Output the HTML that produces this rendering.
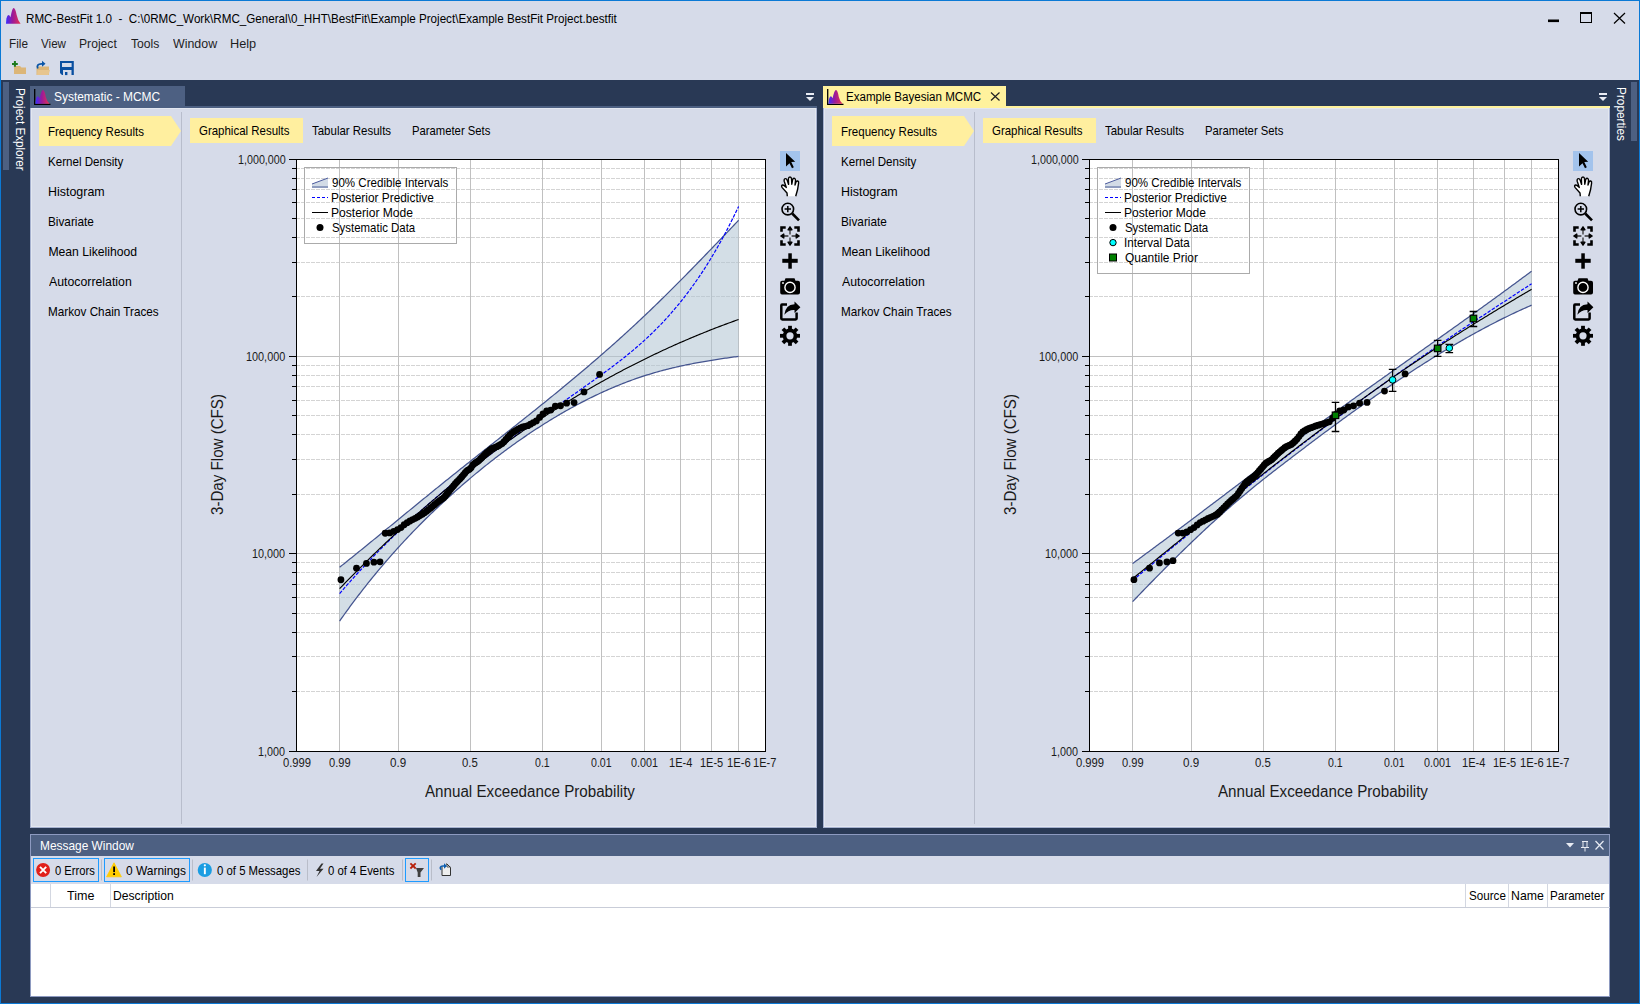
<!DOCTYPE html>
<html><head><meta charset="utf-8"><title>RMC-BestFit</title>
<style>
html,body{margin:0;padding:0;width:1640px;height:1004px;overflow:hidden;background:#d6dbe9;}
body{position:relative;font-family:"Liberation Sans",sans-serif;}
.t{position:absolute;white-space:pre;font-family:"Liberation Sans",sans-serif;transform-origin:0 0;}
.r{position:absolute;}
</style></head><body>
<div class="r" style="left:0px;top:0px;width:1640px;height:1004px;background:#d6dbe9"></div>
<div class="r" style="left:1px;top:80px;width:1638px;height:923px;background:#293955"></div>
<div class="r" style="left:3px;top:82px;width:6px;height:88px;background:#4d6082"></div>
<div class="r" style="left:1631px;top:82px;width:6px;height:59px;background:#4d6082"></div>
<div class="r" style="left:30px;top:86px;width:155px;height:20px;background:#4d6082"></div>
<div class="r" style="left:30px;top:106px;width:787px;height:2px;background:#4d6082"></div>
<div class="r" style="left:30px;top:108px;width:787px;height:720px;background:#a6b1cf"></div>
<div class="r" style="left:31px;top:108px;width:785px;height:719px;background:#e3e7f0"></div>
<div class="r" style="left:32px;top:109px;width:783px;height:717px;background:#d6dbe9"></div>
<div class="r" style="left:823px;top:86px;width:183px;height:20px;background:#fff29d"></div>
<div class="r" style="left:823px;top:106px;width:787px;height:2px;background:#fff29d"></div>
<div class="r" style="left:823px;top:108px;width:787px;height:720px;background:#a6b1cf"></div>
<div class="r" style="left:824px;top:108px;width:785px;height:719px;background:#e3e7f0"></div>
<div class="r" style="left:825px;top:109px;width:783px;height:717px;background:#d6dbe9"></div>
<div class="r" style="left:30px;top:834px;width:1580px;height:163px;background:#8d9ac0"></div>
<div class="r" style="left:31px;top:835px;width:1578px;height:21px;background:#4d6082"></div>
<div class="r" style="left:31px;top:856px;width:1578px;height:28px;background:#d6dbe9"></div>
<div class="r" style="left:31px;top:884px;width:1578px;height:112px;background:#ffffff"></div>
<svg class="r" style="left:0;top:0" width="1640" height="1004">
<polygon points="39,116 171,116 181,131 171,146 39,146" fill="#ffef9f"/>
<rect x="181" y="112" width="1" height="712" fill="#b8bdcc"/>
<rect x="190" y="118" width="113" height="25" fill="#ffef9f"/>
<polygon points="832,116 964,116 974,131 964,146 832,146" fill="#ffef9f"/>
<rect x="974" y="112" width="1" height="712" fill="#b8bdcc"/>
<rect x="983" y="118" width="113" height="25" fill="#ffef9f"/>
<rect x="296" y="159" width="469" height="592" fill="#fff"/>
<line x1="296" y1="691.5" x2="765" y2="691.5" stroke="#d4d4d4" stroke-width="1" stroke-dasharray="4,1"/>
<line x1="296" y1="656.5" x2="765" y2="656.5" stroke="#d4d4d4" stroke-width="1" stroke-dasharray="4,1"/>
<line x1="296" y1="632.5" x2="765" y2="632.5" stroke="#d4d4d4" stroke-width="1" stroke-dasharray="4,1"/>
<line x1="296" y1="613.5" x2="765" y2="613.5" stroke="#d4d4d4" stroke-width="1" stroke-dasharray="4,1"/>
<line x1="296" y1="597.5" x2="765" y2="597.5" stroke="#d4d4d4" stroke-width="1" stroke-dasharray="4,1"/>
<line x1="296" y1="584.5" x2="765" y2="584.5" stroke="#d4d4d4" stroke-width="1" stroke-dasharray="4,1"/>
<line x1="296" y1="572.5" x2="765" y2="572.5" stroke="#d4d4d4" stroke-width="1" stroke-dasharray="4,1"/>
<line x1="296" y1="562.5" x2="765" y2="562.5" stroke="#d4d4d4" stroke-width="1" stroke-dasharray="4,1"/>
<line x1="296" y1="494.5" x2="765" y2="494.5" stroke="#d4d4d4" stroke-width="1" stroke-dasharray="4,1"/>
<line x1="296" y1="459.5" x2="765" y2="459.5" stroke="#d4d4d4" stroke-width="1" stroke-dasharray="4,1"/>
<line x1="296" y1="434.5" x2="765" y2="434.5" stroke="#d4d4d4" stroke-width="1" stroke-dasharray="4,1"/>
<line x1="296" y1="415.5" x2="765" y2="415.5" stroke="#d4d4d4" stroke-width="1" stroke-dasharray="4,1"/>
<line x1="296" y1="400.5" x2="765" y2="400.5" stroke="#d4d4d4" stroke-width="1" stroke-dasharray="4,1"/>
<line x1="296" y1="386.5" x2="765" y2="386.5" stroke="#d4d4d4" stroke-width="1" stroke-dasharray="4,1"/>
<line x1="296" y1="375.5" x2="765" y2="375.5" stroke="#d4d4d4" stroke-width="1" stroke-dasharray="4,1"/>
<line x1="296" y1="365.5" x2="765" y2="365.5" stroke="#d4d4d4" stroke-width="1" stroke-dasharray="4,1"/>
<line x1="296" y1="296.5" x2="765" y2="296.5" stroke="#d4d4d4" stroke-width="1" stroke-dasharray="4,1"/>
<line x1="296" y1="262.5" x2="765" y2="262.5" stroke="#d4d4d4" stroke-width="1" stroke-dasharray="4,1"/>
<line x1="296" y1="237.5" x2="765" y2="237.5" stroke="#d4d4d4" stroke-width="1" stroke-dasharray="4,1"/>
<line x1="296" y1="218.5" x2="765" y2="218.5" stroke="#d4d4d4" stroke-width="1" stroke-dasharray="4,1"/>
<line x1="296" y1="202.5" x2="765" y2="202.5" stroke="#d4d4d4" stroke-width="1" stroke-dasharray="4,1"/>
<line x1="296" y1="189.5" x2="765" y2="189.5" stroke="#d4d4d4" stroke-width="1" stroke-dasharray="4,1"/>
<line x1="296" y1="178.5" x2="765" y2="178.5" stroke="#d4d4d4" stroke-width="1" stroke-dasharray="4,1"/>
<line x1="296" y1="168.5" x2="765" y2="168.5" stroke="#d4d4d4" stroke-width="1" stroke-dasharray="4,1"/>
<line x1="296" y1="553.5" x2="765" y2="553.5" stroke="#c0c0c0" stroke-width="1"/>
<line x1="296" y1="356.5" x2="765" y2="356.5" stroke="#c0c0c0" stroke-width="1"/>
<line x1="339.5" y1="159" x2="339.5" y2="751" stroke="#c0c0c0" stroke-width="1"/>
<line x1="398.5" y1="159" x2="398.5" y2="751" stroke="#c0c0c0" stroke-width="1"/>
<line x1="470.5" y1="159" x2="470.5" y2="751" stroke="#c0c0c0" stroke-width="1"/>
<line x1="542.5" y1="159" x2="542.5" y2="751" stroke="#c0c0c0" stroke-width="1"/>
<line x1="601.5" y1="159" x2="601.5" y2="751" stroke="#c0c0c0" stroke-width="1"/>
<line x1="644.5" y1="159" x2="644.5" y2="751" stroke="#c0c0c0" stroke-width="1"/>
<line x1="680.5" y1="159" x2="680.5" y2="751" stroke="#c0c0c0" stroke-width="1"/>
<line x1="711.5" y1="159" x2="711.5" y2="751" stroke="#c0c0c0" stroke-width="1"/>
<line x1="738.5" y1="159" x2="738.5" y2="751" stroke="#c0c0c0" stroke-width="1"/>
<path d="M339.60,567.27 L341.10,566.07 L342.60,564.87 L344.10,563.67 L345.60,562.47 L347.10,561.27 L348.60,560.06 L350.10,558.86 L351.60,557.65 L353.10,556.44 L354.60,555.23 L356.10,554.02 L357.60,552.81 L359.10,551.59 L360.60,550.37 L362.10,549.16 L363.60,547.94 L365.10,546.72 L366.60,545.50 L368.10,544.28 L369.60,543.06 L371.10,541.84 L372.60,540.61 L374.10,539.39 L375.60,538.16 L377.10,536.94 L378.60,535.71 L380.10,534.48 L381.60,533.26 L383.10,532.03 L384.60,530.80 L386.10,529.57 L387.60,528.34 L389.10,527.11 L390.60,525.88 L392.10,524.65 L393.60,523.42 L395.10,522.19 L396.60,520.96 L398.10,519.73 L399.60,518.50 L401.10,517.27 L402.60,516.04 L404.10,514.81 L405.60,513.58 L407.10,512.35 L408.60,511.12 L410.10,509.89 L411.60,508.66 L413.10,507.43 L414.60,506.20 L416.10,504.98 L417.60,503.75 L419.10,502.52 L420.60,501.30 L422.10,500.07 L423.60,498.85 L425.10,497.62 L426.60,496.40 L428.10,495.18 L429.60,493.96 L431.10,492.74 L432.60,491.52 L434.10,490.30 L435.60,489.08 L437.10,487.87 L438.60,486.65 L440.10,485.44 L441.60,484.23 L443.10,483.02 L444.60,481.81 L446.10,480.60 L447.60,479.40 L449.10,478.19 L450.60,476.99 L452.10,475.79 L453.60,474.58 L455.10,473.39 L456.60,472.19 L458.10,470.99 L459.60,469.79 L461.10,468.60 L462.60,467.41 L464.10,466.21 L465.60,465.02 L467.10,463.83 L468.60,462.64 L470.10,461.45 L471.60,460.27 L473.10,459.08 L474.60,457.89 L476.10,456.70 L477.60,455.52 L479.10,454.33 L480.60,453.15 L482.10,451.96 L483.60,450.78 L485.10,449.60 L486.60,448.41 L488.10,447.23 L489.60,446.05 L491.10,444.86 L492.60,443.68 L494.10,442.50 L495.60,441.32 L497.10,440.13 L498.60,438.95 L500.10,437.77 L501.60,436.58 L503.10,435.40 L504.60,434.22 L506.10,433.03 L507.60,431.85 L509.10,430.66 L510.60,429.47 L512.10,428.29 L513.60,427.10 L515.10,425.91 L516.60,424.72 L518.10,423.54 L519.60,422.35 L521.10,421.15 L522.60,419.96 L524.10,418.77 L525.60,417.57 L527.10,416.38 L528.60,415.18 L530.10,413.99 L531.60,412.79 L533.10,411.59 L534.60,410.39 L536.10,409.18 L537.60,407.98 L539.10,406.78 L540.60,405.57 L542.10,404.36 L543.60,403.15 L545.10,401.94 L546.60,400.73 L548.10,399.51 L549.60,398.29 L551.10,397.08 L552.60,395.86 L554.10,394.63 L555.60,393.41 L557.10,392.18 L558.60,390.96 L560.10,389.73 L561.60,388.49 L563.10,387.26 L564.60,386.02 L566.10,384.78 L567.60,383.54 L569.10,382.30 L570.60,381.05 L572.10,379.81 L573.60,378.56 L575.10,377.30 L576.60,376.05 L578.10,374.79 L579.60,373.53 L581.10,372.26 L582.60,371.00 L584.10,369.73 L585.60,368.46 L587.10,367.18 L588.60,365.90 L590.10,364.62 L591.60,363.34 L593.10,362.05 L594.60,360.76 L596.10,359.47 L597.60,358.17 L599.10,356.87 L600.60,355.57 L602.10,354.27 L603.60,352.96 L605.10,351.64 L606.60,350.33 L608.10,349.01 L609.60,347.68 L611.10,346.36 L612.60,345.03 L614.10,343.69 L615.60,342.35 L617.10,341.01 L618.60,339.67 L620.10,338.32 L621.60,336.96 L623.10,335.61 L624.60,334.25 L626.10,332.88 L627.60,331.51 L629.10,330.14 L630.60,328.76 L632.10,327.38 L633.60,325.99 L635.10,324.60 L636.60,323.20 L638.10,321.81 L639.60,320.40 L641.10,318.99 L642.60,317.58 L644.10,316.16 L645.60,314.74 L647.10,313.31 L648.60,311.88 L650.10,310.45 L651.60,309.01 L653.10,307.56 L654.60,306.11 L656.10,304.66 L657.60,303.20 L659.10,301.74 L660.60,300.28 L662.10,298.81 L663.60,297.33 L665.10,295.86 L666.60,294.38 L668.10,292.89 L669.60,291.41 L671.10,289.91 L672.60,288.42 L674.10,286.92 L675.60,285.42 L677.10,283.92 L678.60,282.41 L680.10,280.90 L681.60,279.38 L683.10,277.87 L684.60,276.35 L686.10,274.82 L687.60,273.30 L689.10,271.77 L690.60,270.24 L692.10,268.71 L693.60,267.17 L695.10,265.63 L696.60,264.09 L698.10,262.55 L699.60,261.00 L701.10,259.46 L702.60,257.91 L704.10,256.36 L705.60,254.80 L707.10,253.25 L708.60,251.69 L710.10,250.13 L711.60,248.57 L713.10,247.01 L714.60,245.44 L716.10,243.88 L717.60,242.31 L719.10,240.75 L720.60,239.18 L722.10,237.61 L723.60,236.04 L725.10,234.46 L726.60,232.89 L728.10,231.31 L729.60,229.74 L731.10,228.16 L732.60,226.59 L734.10,225.01 L735.60,223.43 L737.10,221.85 L738.60,220.27 L738.60,356.37 L737.10,356.57 L735.60,356.77 L734.10,356.97 L732.60,357.18 L731.10,357.38 L729.60,357.59 L728.10,357.80 L726.60,358.01 L725.10,358.23 L723.60,358.45 L722.10,358.67 L720.60,358.89 L719.10,359.11 L717.60,359.34 L716.10,359.57 L714.60,359.81 L713.10,360.04 L711.60,360.28 L710.10,360.53 L708.60,360.77 L707.10,361.02 L705.60,361.28 L704.10,361.54 L702.60,361.80 L701.10,362.06 L699.60,362.33 L698.10,362.60 L696.60,362.88 L695.10,363.16 L693.60,363.45 L692.10,363.74 L690.60,364.03 L689.10,364.33 L687.60,364.64 L686.10,364.95 L684.60,365.26 L683.10,365.58 L681.60,365.90 L680.10,366.23 L678.60,366.57 L677.10,366.91 L675.60,367.25 L674.10,367.60 L672.60,367.96 L671.10,368.32 L669.60,368.69 L668.10,369.06 L666.60,369.44 L665.10,369.83 L663.60,370.22 L662.10,370.62 L660.60,371.02 L659.10,371.43 L657.60,371.85 L656.10,372.27 L654.60,372.70 L653.10,373.14 L651.60,373.59 L650.10,374.04 L648.60,374.50 L647.10,374.96 L645.60,375.44 L644.10,375.92 L642.60,376.41 L641.10,376.90 L639.60,377.41 L638.10,377.92 L636.60,378.43 L635.10,378.96 L633.60,379.49 L632.10,380.03 L630.60,380.58 L629.10,381.13 L627.60,381.70 L626.10,382.26 L624.60,382.84 L623.10,383.42 L621.60,384.02 L620.10,384.61 L618.60,385.22 L617.10,385.83 L615.60,386.45 L614.10,387.08 L612.60,387.71 L611.10,388.35 L609.60,389.00 L608.10,389.66 L606.60,390.32 L605.10,390.99 L603.60,391.66 L602.10,392.35 L600.60,393.04 L599.10,393.74 L597.60,394.44 L596.10,395.15 L594.60,395.87 L593.10,396.59 L591.60,397.33 L590.10,398.06 L588.60,398.81 L587.10,399.56 L585.60,400.32 L584.10,401.09 L582.60,401.86 L581.10,402.64 L579.60,403.43 L578.10,404.22 L576.60,405.02 L575.10,405.83 L573.60,406.64 L572.10,407.46 L570.60,408.29 L569.10,409.12 L567.60,409.96 L566.10,410.81 L564.60,411.66 L563.10,412.52 L561.60,413.39 L560.10,414.26 L558.60,415.14 L557.10,416.02 L555.60,416.92 L554.10,417.82 L552.60,418.72 L551.10,419.63 L549.60,420.55 L548.10,421.48 L546.60,422.41 L545.10,423.34 L543.60,424.29 L542.10,425.24 L540.60,426.19 L539.10,427.16 L537.60,428.13 L536.10,429.10 L534.60,430.08 L533.10,431.07 L531.60,432.07 L530.10,433.07 L528.60,434.07 L527.10,435.09 L525.60,436.11 L524.10,437.13 L522.60,438.16 L521.10,439.20 L519.60,440.25 L518.10,441.30 L516.60,442.36 L515.10,443.42 L513.60,444.49 L512.10,445.57 L510.60,446.65 L509.10,447.74 L507.60,448.84 L506.10,449.94 L504.60,451.05 L503.10,452.16 L501.60,453.29 L500.10,454.42 L498.60,455.55 L497.10,456.69 L495.60,457.84 L494.10,459.00 L492.60,460.16 L491.10,461.33 L489.60,462.50 L488.10,463.68 L486.60,464.87 L485.10,466.07 L483.60,467.27 L482.10,468.48 L480.60,469.69 L479.10,470.92 L477.60,472.15 L476.10,473.38 L474.60,474.62 L473.10,475.87 L471.60,477.13 L470.10,478.39 L468.60,479.66 L467.10,480.94 L465.60,482.22 L464.10,483.51 L462.60,484.81 L461.10,486.11 L459.60,487.42 L458.10,488.74 L456.60,490.07 L455.10,491.40 L453.60,492.74 L452.10,494.08 L450.60,495.44 L449.10,496.80 L447.60,498.16 L446.10,499.54 L444.60,500.92 L443.10,502.31 L441.60,503.70 L440.10,505.10 L438.60,506.51 L437.10,507.93 L435.60,509.35 L434.10,510.79 L432.60,512.23 L431.10,513.67 L429.60,515.13 L428.10,516.59 L426.60,518.06 L425.10,519.54 L423.60,521.03 L422.10,522.53 L420.60,524.03 L419.10,525.55 L417.60,527.07 L416.10,528.60 L414.60,530.14 L413.10,531.69 L411.60,533.25 L410.10,534.82 L408.60,536.40 L407.10,537.99 L405.60,539.59 L404.10,541.19 L402.60,542.81 L401.10,544.44 L399.60,546.07 L398.10,547.72 L396.60,549.38 L395.10,551.05 L393.60,552.73 L392.10,554.42 L390.60,556.12 L389.10,557.83 L387.60,559.55 L386.10,561.28 L384.60,563.03 L383.10,564.78 L381.60,566.55 L380.10,568.33 L378.60,570.12 L377.10,571.92 L375.60,573.73 L374.10,575.56 L372.60,577.40 L371.10,579.25 L369.60,581.11 L368.10,582.98 L366.60,584.87 L365.10,586.77 L363.60,588.68 L362.10,590.61 L360.60,592.55 L359.10,594.50 L357.60,596.46 L356.10,598.44 L354.60,600.43 L353.10,602.44 L351.60,604.46 L350.10,606.49 L348.60,608.54 L347.10,610.59 L345.60,612.67 L344.10,614.76 L342.60,616.86 L341.10,618.98 L339.60,621.11 Z" fill="#afc2d2" fill-opacity="0.55" stroke="none"/>
<path d="M339.60,567.27 L341.10,566.07 L342.60,564.87 L344.10,563.67 L345.60,562.47 L347.10,561.27 L348.60,560.06 L350.10,558.86 L351.60,557.65 L353.10,556.44 L354.60,555.23 L356.10,554.02 L357.60,552.81 L359.10,551.59 L360.60,550.37 L362.10,549.16 L363.60,547.94 L365.10,546.72 L366.60,545.50 L368.10,544.28 L369.60,543.06 L371.10,541.84 L372.60,540.61 L374.10,539.39 L375.60,538.16 L377.10,536.94 L378.60,535.71 L380.10,534.48 L381.60,533.26 L383.10,532.03 L384.60,530.80 L386.10,529.57 L387.60,528.34 L389.10,527.11 L390.60,525.88 L392.10,524.65 L393.60,523.42 L395.10,522.19 L396.60,520.96 L398.10,519.73 L399.60,518.50 L401.10,517.27 L402.60,516.04 L404.10,514.81 L405.60,513.58 L407.10,512.35 L408.60,511.12 L410.10,509.89 L411.60,508.66 L413.10,507.43 L414.60,506.20 L416.10,504.98 L417.60,503.75 L419.10,502.52 L420.60,501.30 L422.10,500.07 L423.60,498.85 L425.10,497.62 L426.60,496.40 L428.10,495.18 L429.60,493.96 L431.10,492.74 L432.60,491.52 L434.10,490.30 L435.60,489.08 L437.10,487.87 L438.60,486.65 L440.10,485.44 L441.60,484.23 L443.10,483.02 L444.60,481.81 L446.10,480.60 L447.60,479.40 L449.10,478.19 L450.60,476.99 L452.10,475.79 L453.60,474.58 L455.10,473.39 L456.60,472.19 L458.10,470.99 L459.60,469.79 L461.10,468.60 L462.60,467.41 L464.10,466.21 L465.60,465.02 L467.10,463.83 L468.60,462.64 L470.10,461.45 L471.60,460.27 L473.10,459.08 L474.60,457.89 L476.10,456.70 L477.60,455.52 L479.10,454.33 L480.60,453.15 L482.10,451.96 L483.60,450.78 L485.10,449.60 L486.60,448.41 L488.10,447.23 L489.60,446.05 L491.10,444.86 L492.60,443.68 L494.10,442.50 L495.60,441.32 L497.10,440.13 L498.60,438.95 L500.10,437.77 L501.60,436.58 L503.10,435.40 L504.60,434.22 L506.10,433.03 L507.60,431.85 L509.10,430.66 L510.60,429.47 L512.10,428.29 L513.60,427.10 L515.10,425.91 L516.60,424.72 L518.10,423.54 L519.60,422.35 L521.10,421.15 L522.60,419.96 L524.10,418.77 L525.60,417.57 L527.10,416.38 L528.60,415.18 L530.10,413.99 L531.60,412.79 L533.10,411.59 L534.60,410.39 L536.10,409.18 L537.60,407.98 L539.10,406.78 L540.60,405.57 L542.10,404.36 L543.60,403.15 L545.10,401.94 L546.60,400.73 L548.10,399.51 L549.60,398.29 L551.10,397.08 L552.60,395.86 L554.10,394.63 L555.60,393.41 L557.10,392.18 L558.60,390.96 L560.10,389.73 L561.60,388.49 L563.10,387.26 L564.60,386.02 L566.10,384.78 L567.60,383.54 L569.10,382.30 L570.60,381.05 L572.10,379.81 L573.60,378.56 L575.10,377.30 L576.60,376.05 L578.10,374.79 L579.60,373.53 L581.10,372.26 L582.60,371.00 L584.10,369.73 L585.60,368.46 L587.10,367.18 L588.60,365.90 L590.10,364.62 L591.60,363.34 L593.10,362.05 L594.60,360.76 L596.10,359.47 L597.60,358.17 L599.10,356.87 L600.60,355.57 L602.10,354.27 L603.60,352.96 L605.10,351.64 L606.60,350.33 L608.10,349.01 L609.60,347.68 L611.10,346.36 L612.60,345.03 L614.10,343.69 L615.60,342.35 L617.10,341.01 L618.60,339.67 L620.10,338.32 L621.60,336.96 L623.10,335.61 L624.60,334.25 L626.10,332.88 L627.60,331.51 L629.10,330.14 L630.60,328.76 L632.10,327.38 L633.60,325.99 L635.10,324.60 L636.60,323.20 L638.10,321.81 L639.60,320.40 L641.10,318.99 L642.60,317.58 L644.10,316.16 L645.60,314.74 L647.10,313.31 L648.60,311.88 L650.10,310.45 L651.60,309.01 L653.10,307.56 L654.60,306.11 L656.10,304.66 L657.60,303.20 L659.10,301.74 L660.60,300.28 L662.10,298.81 L663.60,297.33 L665.10,295.86 L666.60,294.38 L668.10,292.89 L669.60,291.41 L671.10,289.91 L672.60,288.42 L674.10,286.92 L675.60,285.42 L677.10,283.92 L678.60,282.41 L680.10,280.90 L681.60,279.38 L683.10,277.87 L684.60,276.35 L686.10,274.82 L687.60,273.30 L689.10,271.77 L690.60,270.24 L692.10,268.71 L693.60,267.17 L695.10,265.63 L696.60,264.09 L698.10,262.55 L699.60,261.00 L701.10,259.46 L702.60,257.91 L704.10,256.36 L705.60,254.80 L707.10,253.25 L708.60,251.69 L710.10,250.13 L711.60,248.57 L713.10,247.01 L714.60,245.44 L716.10,243.88 L717.60,242.31 L719.10,240.75 L720.60,239.18 L722.10,237.61 L723.60,236.04 L725.10,234.46 L726.60,232.89 L728.10,231.31 L729.60,229.74 L731.10,228.16 L732.60,226.59 L734.10,225.01 L735.60,223.43 L737.10,221.85 L738.60,220.27" fill="none" stroke="#44548f" stroke-width="1.25"/>
<path d="M339.60,621.11 L341.10,618.98 L342.60,616.86 L344.10,614.76 L345.60,612.67 L347.10,610.59 L348.60,608.54 L350.10,606.49 L351.60,604.46 L353.10,602.44 L354.60,600.43 L356.10,598.44 L357.60,596.46 L359.10,594.50 L360.60,592.55 L362.10,590.61 L363.60,588.68 L365.10,586.77 L366.60,584.87 L368.10,582.98 L369.60,581.11 L371.10,579.25 L372.60,577.40 L374.10,575.56 L375.60,573.73 L377.10,571.92 L378.60,570.12 L380.10,568.33 L381.60,566.55 L383.10,564.78 L384.60,563.03 L386.10,561.28 L387.60,559.55 L389.10,557.83 L390.60,556.12 L392.10,554.42 L393.60,552.73 L395.10,551.05 L396.60,549.38 L398.10,547.72 L399.60,546.07 L401.10,544.44 L402.60,542.81 L404.10,541.19 L405.60,539.59 L407.10,537.99 L408.60,536.40 L410.10,534.82 L411.60,533.25 L413.10,531.69 L414.60,530.14 L416.10,528.60 L417.60,527.07 L419.10,525.55 L420.60,524.03 L422.10,522.53 L423.60,521.03 L425.10,519.54 L426.60,518.06 L428.10,516.59 L429.60,515.13 L431.10,513.67 L432.60,512.23 L434.10,510.79 L435.60,509.35 L437.10,507.93 L438.60,506.51 L440.10,505.10 L441.60,503.70 L443.10,502.31 L444.60,500.92 L446.10,499.54 L447.60,498.16 L449.10,496.80 L450.60,495.44 L452.10,494.08 L453.60,492.74 L455.10,491.40 L456.60,490.07 L458.10,488.74 L459.60,487.42 L461.10,486.11 L462.60,484.81 L464.10,483.51 L465.60,482.22 L467.10,480.94 L468.60,479.66 L470.10,478.39 L471.60,477.13 L473.10,475.87 L474.60,474.62 L476.10,473.38 L477.60,472.15 L479.10,470.92 L480.60,469.69 L482.10,468.48 L483.60,467.27 L485.10,466.07 L486.60,464.87 L488.10,463.68 L489.60,462.50 L491.10,461.33 L492.60,460.16 L494.10,459.00 L495.60,457.84 L497.10,456.69 L498.60,455.55 L500.10,454.42 L501.60,453.29 L503.10,452.16 L504.60,451.05 L506.10,449.94 L507.60,448.84 L509.10,447.74 L510.60,446.65 L512.10,445.57 L513.60,444.49 L515.10,443.42 L516.60,442.36 L518.10,441.30 L519.60,440.25 L521.10,439.20 L522.60,438.16 L524.10,437.13 L525.60,436.11 L527.10,435.09 L528.60,434.07 L530.10,433.07 L531.60,432.07 L533.10,431.07 L534.60,430.08 L536.10,429.10 L537.60,428.13 L539.10,427.16 L540.60,426.19 L542.10,425.24 L543.60,424.29 L545.10,423.34 L546.60,422.41 L548.10,421.48 L549.60,420.55 L551.10,419.63 L552.60,418.72 L554.10,417.82 L555.60,416.92 L557.10,416.02 L558.60,415.14 L560.10,414.26 L561.60,413.39 L563.10,412.52 L564.60,411.66 L566.10,410.81 L567.60,409.96 L569.10,409.12 L570.60,408.29 L572.10,407.46 L573.60,406.64 L575.10,405.83 L576.60,405.02 L578.10,404.22 L579.60,403.43 L581.10,402.64 L582.60,401.86 L584.10,401.09 L585.60,400.32 L587.10,399.56 L588.60,398.81 L590.10,398.06 L591.60,397.33 L593.10,396.59 L594.60,395.87 L596.10,395.15 L597.60,394.44 L599.10,393.74 L600.60,393.04 L602.10,392.35 L603.60,391.66 L605.10,390.99 L606.60,390.32 L608.10,389.66 L609.60,389.00 L611.10,388.35 L612.60,387.71 L614.10,387.08 L615.60,386.45 L617.10,385.83 L618.60,385.22 L620.10,384.61 L621.60,384.02 L623.10,383.42 L624.60,382.84 L626.10,382.26 L627.60,381.70 L629.10,381.13 L630.60,380.58 L632.10,380.03 L633.60,379.49 L635.10,378.96 L636.60,378.43 L638.10,377.92 L639.60,377.41 L641.10,376.90 L642.60,376.41 L644.10,375.92 L645.60,375.44 L647.10,374.96 L648.60,374.50 L650.10,374.04 L651.60,373.59 L653.10,373.14 L654.60,372.70 L656.10,372.27 L657.60,371.85 L659.10,371.43 L660.60,371.02 L662.10,370.62 L663.60,370.22 L665.10,369.83 L666.60,369.44 L668.10,369.06 L669.60,368.69 L671.10,368.32 L672.60,367.96 L674.10,367.60 L675.60,367.25 L677.10,366.91 L678.60,366.57 L680.10,366.23 L681.60,365.90 L683.10,365.58 L684.60,365.26 L686.10,364.95 L687.60,364.64 L689.10,364.33 L690.60,364.03 L692.10,363.74 L693.60,363.45 L695.10,363.16 L696.60,362.88 L698.10,362.60 L699.60,362.33 L701.10,362.06 L702.60,361.80 L704.10,361.54 L705.60,361.28 L707.10,361.02 L708.60,360.77 L710.10,360.53 L711.60,360.28 L713.10,360.04 L714.60,359.81 L716.10,359.57 L717.60,359.34 L719.10,359.11 L720.60,358.89 L722.10,358.67 L723.60,358.45 L725.10,358.23 L726.60,358.01 L728.10,357.80 L729.60,357.59 L731.10,357.38 L732.60,357.18 L734.10,356.97 L735.60,356.77 L737.10,356.57 L738.60,356.37" fill="none" stroke="#44548f" stroke-width="1.25"/>
<path d="M339.60,593.60 L341.10,591.86 L342.60,590.12 L344.10,588.39 L345.60,586.68 L347.10,584.97 L348.60,583.27 L350.10,581.58 L351.60,579.90 L353.10,578.23 L354.60,576.57 L356.10,574.91 L357.60,573.27 L359.10,571.63 L360.60,570.00 L362.10,568.38 L363.60,566.77 L365.10,565.16 L366.60,563.57 L368.10,561.98 L369.60,560.40 L371.10,558.83 L372.60,557.27 L374.10,555.71 L375.60,554.16 L377.10,552.62 L378.60,551.09 L380.10,549.57 L381.60,548.05 L383.10,546.54 L384.60,545.04 L386.10,543.55 L387.60,542.06 L389.10,540.58 L390.60,539.11 L392.10,537.65 L393.60,536.19 L395.10,534.74 L396.60,533.29 L398.10,531.86 L399.60,530.43 L401.10,529.00 L402.60,527.59 L404.10,526.18 L405.60,524.77 L407.10,523.38 L408.60,521.99 L410.10,520.60 L411.60,519.23 L413.10,517.86 L414.60,516.49 L416.10,515.13 L417.60,513.78 L419.10,512.43 L420.60,511.09 L422.10,509.76 L423.60,508.43 L425.10,507.11 L426.60,505.79 L428.10,504.48 L429.60,503.17 L431.10,501.87 L432.60,500.58 L434.10,499.29 L435.60,498.01 L437.10,496.73 L438.60,495.45 L440.10,494.19 L441.60,492.92 L443.10,491.67 L444.60,490.41 L446.10,489.17 L447.60,487.92 L449.10,486.68 L450.60,485.45 L452.10,484.22 L453.60,483.00 L455.10,481.78 L456.60,480.56 L458.10,479.35 L459.60,478.15 L461.10,476.94 L462.60,475.75 L464.10,474.55 L465.60,473.36 L467.10,472.18 L468.60,471.00 L470.10,469.82 L471.60,468.64 L473.10,467.48 L474.60,466.31 L476.10,465.15 L477.60,463.99 L479.10,462.83 L480.60,461.68 L482.10,460.53 L483.60,459.39 L485.10,458.25 L486.60,457.11 L488.10,455.97 L489.60,454.84 L491.10,453.71 L492.60,452.59 L494.10,451.46 L495.60,450.34 L497.10,449.23 L498.60,448.11 L500.10,447.00 L501.60,445.89 L503.10,444.78 L504.60,443.68 L506.10,442.58 L507.60,441.48 L509.10,440.38 L510.60,439.29 L512.10,438.19 L513.60,437.10 L515.10,436.01 L516.60,434.93 L518.10,433.84 L519.60,432.76 L521.10,431.68 L522.60,430.60 L524.10,429.52 L525.60,428.45 L527.10,427.37 L528.60,426.30 L530.10,425.23 L531.60,424.16 L533.10,423.09 L534.60,422.02 L536.10,420.96 L537.60,419.89 L539.10,418.83 L540.60,417.77 L542.10,416.70 L543.60,415.64 L545.10,414.58 L546.60,413.52 L548.10,412.46 L549.60,411.41 L551.10,410.35 L552.60,409.29 L554.10,408.23 L555.60,407.18 L557.10,406.12 L558.60,405.07 L560.10,404.01 L561.60,402.95 L563.10,401.90 L564.60,400.84 L566.10,399.79 L567.60,398.73 L569.10,397.68 L570.60,396.62 L572.10,395.56 L573.60,394.51 L575.10,393.45 L576.60,392.39 L578.10,391.33 L579.60,390.28 L581.10,389.22 L582.60,388.16 L584.10,387.09 L585.60,386.03 L587.10,384.97 L588.60,383.91 L590.10,382.84 L591.60,381.77 L593.10,380.71 L594.60,379.64 L596.10,378.57 L597.60,377.49 L599.10,376.41 L600.60,375.33 L602.10,374.25 L603.60,373.16 L605.10,372.06 L606.60,370.96 L608.10,369.86 L609.60,368.75 L611.10,367.63 L612.60,366.51 L614.10,365.37 L615.60,364.24 L617.10,363.09 L618.60,361.93 L620.10,360.77 L621.60,359.60 L623.10,358.42 L624.60,357.22 L626.10,356.02 L627.60,354.81 L629.10,353.59 L630.60,352.35 L632.10,351.10 L633.60,349.84 L635.10,348.57 L636.60,347.28 L638.10,345.99 L639.60,344.67 L641.10,343.35 L642.60,342.00 L644.10,340.65 L645.60,339.28 L647.10,337.89 L648.60,336.48 L650.10,335.06 L651.60,333.62 L653.10,332.17 L654.60,330.69 L656.10,329.20 L657.60,327.69 L659.10,326.16 L660.60,324.61 L662.10,323.05 L663.60,321.46 L665.10,319.85 L666.60,318.22 L668.10,316.57 L669.60,314.89 L671.10,313.20 L672.60,311.48 L674.10,309.73 L675.60,307.97 L677.10,306.18 L678.60,304.36 L680.10,302.52 L681.60,300.66 L683.10,298.77 L684.60,296.85 L686.10,294.90 L687.60,292.93 L689.10,290.93 L690.60,288.90 L692.10,286.85 L693.60,284.76 L695.10,282.64 L696.60,280.50 L698.10,278.32 L699.60,276.12 L701.10,273.88 L702.60,271.61 L704.10,269.31 L705.60,266.97 L707.10,264.60 L708.60,262.20 L710.10,259.77 L711.60,257.30 L713.10,254.79 L714.60,252.25 L716.10,249.67 L717.60,247.06 L719.10,244.41 L720.60,241.72 L722.10,239.00 L723.60,236.24 L725.10,233.44 L726.60,230.60 L728.10,227.72 L729.60,224.80 L731.10,221.84 L732.60,218.84 L734.10,215.80 L735.60,212.71 L737.10,209.59 L738.60,206.42" fill="none" stroke="#0000ff" stroke-width="1.2" stroke-dasharray="3.5,1.5"/>
<path d="M339.60,588.67 L341.10,587.12 L342.60,585.56 L344.10,584.02 L345.60,582.47 L347.10,580.94 L348.60,579.40 L350.10,577.87 L351.60,576.35 L353.10,574.83 L354.60,573.32 L356.10,571.80 L357.60,570.30 L359.10,568.80 L360.60,567.30 L362.10,565.81 L363.60,564.32 L365.10,562.84 L366.60,561.36 L368.10,559.88 L369.60,558.41 L371.10,556.95 L372.60,555.49 L374.10,554.03 L375.60,552.58 L377.10,551.13 L378.60,549.69 L380.10,548.25 L381.60,546.82 L383.10,545.39 L384.60,543.96 L386.10,542.54 L387.60,541.13 L389.10,539.72 L390.60,538.31 L392.10,536.91 L393.60,535.51 L395.10,534.11 L396.60,532.72 L398.10,531.34 L399.60,529.96 L401.10,528.58 L402.60,527.21 L404.10,525.84 L405.60,524.48 L407.10,523.12 L408.60,521.77 L410.10,520.41 L411.60,519.07 L413.10,517.73 L414.60,516.39 L416.10,515.06 L417.60,513.73 L419.10,512.40 L420.60,511.08 L422.10,509.77 L423.60,508.46 L425.10,507.15 L426.60,505.85 L428.10,504.55 L429.60,503.26 L431.10,501.97 L432.60,500.68 L434.10,499.40 L435.60,498.12 L437.10,496.85 L438.60,495.58 L440.10,494.32 L441.60,493.06 L443.10,491.80 L444.60,490.55 L446.10,489.30 L447.60,488.06 L449.10,486.82 L450.60,485.58 L452.10,484.35 L453.60,483.13 L455.10,481.90 L456.60,480.69 L458.10,479.47 L459.60,478.26 L461.10,477.06 L462.60,475.85 L464.10,474.66 L465.60,473.46 L467.10,472.27 L468.60,471.09 L470.10,469.91 L471.60,468.73 L473.10,467.56 L474.60,466.39 L476.10,465.23 L477.60,464.07 L479.10,462.91 L480.60,461.76 L482.10,460.61 L483.60,459.47 L485.10,458.33 L486.60,457.19 L488.10,456.06 L489.60,454.93 L491.10,453.81 L492.60,452.69 L494.10,451.57 L495.60,450.46 L497.10,449.35 L498.60,448.25 L500.10,447.15 L501.60,446.05 L503.10,444.96 L504.60,443.88 L506.10,442.79 L507.60,441.71 L509.10,440.64 L510.60,439.57 L512.10,438.50 L513.60,437.43 L515.10,436.37 L516.60,435.32 L518.10,434.27 L519.60,433.22 L521.10,432.17 L522.60,431.13 L524.10,430.10 L525.60,429.07 L527.10,428.04 L528.60,427.01 L530.10,425.99 L531.60,424.98 L533.10,423.96 L534.60,422.96 L536.10,421.95 L537.60,420.95 L539.10,419.95 L540.60,418.96 L542.10,417.97 L543.60,416.98 L545.10,416.00 L546.60,415.02 L548.10,414.05 L549.60,413.08 L551.10,412.11 L552.60,411.15 L554.10,410.19 L555.60,409.24 L557.10,408.28 L558.60,407.34 L560.10,406.39 L561.60,405.45 L563.10,404.52 L564.60,403.58 L566.10,402.66 L567.60,401.73 L569.10,400.81 L570.60,399.89 L572.10,398.98 L573.60,398.07 L575.10,397.16 L576.60,396.26 L578.10,395.36 L579.60,394.47 L581.10,393.58 L582.60,392.69 L584.10,391.80 L585.60,390.92 L587.10,390.05 L588.60,389.17 L590.10,388.30 L591.60,387.44 L593.10,386.58 L594.60,385.72 L596.10,384.86 L597.60,384.01 L599.10,383.17 L600.60,382.32 L602.10,381.48 L603.60,380.65 L605.10,379.81 L606.60,378.98 L608.10,378.16 L609.60,377.34 L611.10,376.52 L612.60,375.70 L614.10,374.89 L615.60,374.08 L617.10,373.28 L618.60,372.48 L620.10,371.68 L621.60,370.89 L623.10,370.10 L624.60,369.31 L626.10,368.53 L627.60,367.75 L629.10,366.97 L630.60,366.20 L632.10,365.43 L633.60,364.67 L635.10,363.91 L636.60,363.15 L638.10,362.39 L639.60,361.64 L641.10,360.89 L642.60,360.15 L644.10,359.41 L645.60,358.67 L647.10,357.94 L648.60,357.21 L650.10,356.48 L651.60,355.76 L653.10,355.04 L654.60,354.32 L656.10,353.61 L657.60,352.90 L659.10,352.19 L660.60,351.49 L662.10,350.79 L663.60,350.09 L665.10,349.40 L666.60,348.71 L668.10,348.02 L669.60,347.34 L671.10,346.66 L672.60,345.98 L674.10,345.31 L675.60,344.64 L677.10,343.98 L678.60,343.31 L680.10,342.65 L681.60,342.00 L683.10,341.35 L684.60,340.70 L686.10,340.05 L687.60,339.41 L689.10,338.77 L690.60,338.13 L692.10,337.50 L693.60,336.87 L695.10,336.24 L696.60,335.62 L698.10,335.00 L699.60,334.38 L701.10,333.77 L702.60,333.16 L704.10,332.55 L705.60,331.95 L707.10,331.35 L708.60,330.75 L710.10,330.16 L711.60,329.57 L713.10,328.98 L714.60,328.40 L716.10,327.81 L717.60,327.24 L719.10,326.66 L720.60,326.09 L722.10,325.52 L723.60,324.96 L725.10,324.39 L726.60,323.84 L728.10,323.28 L729.60,322.73 L731.10,322.18 L732.60,321.63 L734.10,321.09 L735.60,320.55 L737.10,320.01 L738.60,319.48" fill="none" stroke="#000" stroke-width="1.15"/>
<circle cx="599.59" cy="374.47" r="3.4" fill="#000"/>
<circle cx="584.00" cy="391.97" r="3.4" fill="#000"/>
<circle cx="574.08" cy="402.53" r="3.4" fill="#000"/>
<circle cx="566.61" cy="403.13" r="3.4" fill="#000"/>
<circle cx="560.52" cy="405.73" r="3.4" fill="#000"/>
<circle cx="555.33" cy="406.25" r="3.4" fill="#000"/>
<circle cx="550.77" cy="410.03" r="3.4" fill="#000"/>
<circle cx="546.69" cy="410.86" r="3.4" fill="#000"/>
<circle cx="542.97" cy="413.93" r="3.4" fill="#000"/>
<circle cx="539.54" cy="417.45" r="3.4" fill="#000"/>
<circle cx="536.35" cy="420.90" r="3.4" fill="#000"/>
<circle cx="533.36" cy="422.59" r="3.4" fill="#000"/>
<circle cx="530.53" cy="424.18" r="3.4" fill="#000"/>
<circle cx="527.85" cy="425.67" r="3.4" fill="#000"/>
<circle cx="525.29" cy="426.36" r="3.4" fill="#000"/>
<circle cx="522.85" cy="427.01" r="3.4" fill="#000"/>
<circle cx="520.49" cy="427.80" r="3.4" fill="#000"/>
<circle cx="518.22" cy="429.11" r="3.4" fill="#000"/>
<circle cx="516.03" cy="430.39" r="3.4" fill="#000"/>
<circle cx="513.90" cy="431.63" r="3.4" fill="#000"/>
<circle cx="511.83" cy="433.35" r="3.4" fill="#000"/>
<circle cx="509.82" cy="435.11" r="3.4" fill="#000"/>
<circle cx="507.85" cy="437.13" r="3.4" fill="#000"/>
<circle cx="505.93" cy="439.44" r="3.4" fill="#000"/>
<circle cx="504.06" cy="441.69" r="3.4" fill="#000"/>
<circle cx="502.21" cy="443.54" r="3.4" fill="#000"/>
<circle cx="500.40" cy="444.60" r="3.4" fill="#000"/>
<circle cx="498.63" cy="445.64" r="3.4" fill="#000"/>
<circle cx="496.87" cy="446.66" r="3.4" fill="#000"/>
<circle cx="495.15" cy="447.37" r="3.4" fill="#000"/>
<circle cx="493.45" cy="448.06" r="3.4" fill="#000"/>
<circle cx="491.76" cy="448.75" r="3.4" fill="#000"/>
<circle cx="490.10" cy="449.82" r="3.4" fill="#000"/>
<circle cx="488.45" cy="451.30" r="3.4" fill="#000"/>
<circle cx="486.82" cy="452.77" r="3.4" fill="#000"/>
<circle cx="485.21" cy="454.22" r="3.4" fill="#000"/>
<circle cx="483.60" cy="455.80" r="3.4" fill="#000"/>
<circle cx="482.01" cy="457.39" r="3.4" fill="#000"/>
<circle cx="480.42" cy="458.98" r="3.4" fill="#000"/>
<circle cx="478.85" cy="460.54" r="3.4" fill="#000"/>
<circle cx="477.28" cy="461.64" r="3.4" fill="#000"/>
<circle cx="475.71" cy="462.73" r="3.4" fill="#000"/>
<circle cx="474.15" cy="463.82" r="3.4" fill="#000"/>
<circle cx="472.59" cy="465.21" r="3.4" fill="#000"/>
<circle cx="471.04" cy="467.82" r="3.4" fill="#000"/>
<circle cx="469.48" cy="469.30" r="3.4" fill="#000"/>
<circle cx="467.93" cy="470.12" r="3.4" fill="#000"/>
<circle cx="466.37" cy="471.35" r="3.4" fill="#000"/>
<circle cx="464.81" cy="473.22" r="3.4" fill="#000"/>
<circle cx="463.24" cy="475.09" r="3.4" fill="#000"/>
<circle cx="461.67" cy="476.97" r="3.4" fill="#000"/>
<circle cx="460.10" cy="478.67" r="3.4" fill="#000"/>
<circle cx="458.51" cy="480.33" r="3.4" fill="#000"/>
<circle cx="456.92" cy="482.01" r="3.4" fill="#000"/>
<circle cx="455.31" cy="483.70" r="3.4" fill="#000"/>
<circle cx="453.70" cy="485.65" r="3.4" fill="#000"/>
<circle cx="452.07" cy="487.62" r="3.4" fill="#000"/>
<circle cx="450.42" cy="489.62" r="3.4" fill="#000"/>
<circle cx="448.76" cy="491.68" r="3.4" fill="#000"/>
<circle cx="447.07" cy="493.77" r="3.4" fill="#000"/>
<circle cx="445.37" cy="495.88" r="3.4" fill="#000"/>
<circle cx="443.65" cy="497.87" r="3.4" fill="#000"/>
<circle cx="441.89" cy="499.07" r="3.4" fill="#000"/>
<circle cx="440.12" cy="500.29" r="3.4" fill="#000"/>
<circle cx="438.31" cy="501.53" r="3.4" fill="#000"/>
<circle cx="436.46" cy="503.09" r="3.4" fill="#000"/>
<circle cx="434.59" cy="504.70" r="3.4" fill="#000"/>
<circle cx="432.67" cy="506.34" r="3.4" fill="#000"/>
<circle cx="430.70" cy="507.96" r="3.4" fill="#000"/>
<circle cx="428.69" cy="509.56" r="3.4" fill="#000"/>
<circle cx="426.62" cy="511.21" r="3.4" fill="#000"/>
<circle cx="424.49" cy="512.81" r="3.4" fill="#000"/>
<circle cx="422.30" cy="514.15" r="3.4" fill="#000"/>
<circle cx="420.03" cy="515.55" r="3.4" fill="#000"/>
<circle cx="417.67" cy="516.99" r="3.4" fill="#000"/>
<circle cx="415.23" cy="518.29" r="3.4" fill="#000"/>
<circle cx="412.67" cy="519.57" r="3.4" fill="#000"/>
<circle cx="409.99" cy="521.01" r="3.4" fill="#000"/>
<circle cx="407.16" cy="522.70" r="3.4" fill="#000"/>
<circle cx="404.17" cy="524.73" r="3.4" fill="#000"/>
<circle cx="400.98" cy="527.55" r="3.4" fill="#000"/>
<circle cx="397.55" cy="529.59" r="3.4" fill="#000"/>
<circle cx="393.83" cy="531.31" r="3.4" fill="#000"/>
<circle cx="389.75" cy="532.95" r="3.4" fill="#000"/>
<circle cx="385.19" cy="533.27" r="3.4" fill="#000"/>
<circle cx="380.00" cy="561.80" r="3.4" fill="#000"/>
<circle cx="373.91" cy="562.19" r="3.4" fill="#000"/>
<circle cx="366.44" cy="563.38" r="3.4" fill="#000"/>
<circle cx="356.52" cy="568.19" r="3.4" fill="#000"/>
<circle cx="340.93" cy="579.73" r="3.4" fill="#000"/>
<rect x="296.5" y="159.5" width="469" height="592" fill="none" stroke="#000" stroke-width="1"/>
<line x1="289" y1="751.5" x2="296" y2="751.5" stroke="#000" stroke-width="1"/>
<line x1="292" y1="691.5" x2="296" y2="691.5" stroke="#000" stroke-width="1"/>
<line x1="292" y1="656.5" x2="296" y2="656.5" stroke="#000" stroke-width="1"/>
<line x1="292" y1="632.5" x2="296" y2="632.5" stroke="#000" stroke-width="1"/>
<line x1="292" y1="613.5" x2="296" y2="613.5" stroke="#000" stroke-width="1"/>
<line x1="292" y1="597.5" x2="296" y2="597.5" stroke="#000" stroke-width="1"/>
<line x1="292" y1="584.5" x2="296" y2="584.5" stroke="#000" stroke-width="1"/>
<line x1="292" y1="572.5" x2="296" y2="572.5" stroke="#000" stroke-width="1"/>
<line x1="292" y1="562.5" x2="296" y2="562.5" stroke="#000" stroke-width="1"/>
<line x1="289" y1="553.5" x2="296" y2="553.5" stroke="#000" stroke-width="1"/>
<line x1="292" y1="494.5" x2="296" y2="494.5" stroke="#000" stroke-width="1"/>
<line x1="292" y1="459.5" x2="296" y2="459.5" stroke="#000" stroke-width="1"/>
<line x1="292" y1="434.5" x2="296" y2="434.5" stroke="#000" stroke-width="1"/>
<line x1="292" y1="415.5" x2="296" y2="415.5" stroke="#000" stroke-width="1"/>
<line x1="292" y1="400.5" x2="296" y2="400.5" stroke="#000" stroke-width="1"/>
<line x1="292" y1="386.5" x2="296" y2="386.5" stroke="#000" stroke-width="1"/>
<line x1="292" y1="375.5" x2="296" y2="375.5" stroke="#000" stroke-width="1"/>
<line x1="292" y1="365.5" x2="296" y2="365.5" stroke="#000" stroke-width="1"/>
<line x1="289" y1="356.5" x2="296" y2="356.5" stroke="#000" stroke-width="1"/>
<line x1="292" y1="296.5" x2="296" y2="296.5" stroke="#000" stroke-width="1"/>
<line x1="292" y1="262.5" x2="296" y2="262.5" stroke="#000" stroke-width="1"/>
<line x1="292" y1="237.5" x2="296" y2="237.5" stroke="#000" stroke-width="1"/>
<line x1="292" y1="218.5" x2="296" y2="218.5" stroke="#000" stroke-width="1"/>
<line x1="292" y1="202.5" x2="296" y2="202.5" stroke="#000" stroke-width="1"/>
<line x1="292" y1="189.5" x2="296" y2="189.5" stroke="#000" stroke-width="1"/>
<line x1="292" y1="178.5" x2="296" y2="178.5" stroke="#000" stroke-width="1"/>
<line x1="292" y1="168.5" x2="296" y2="168.5" stroke="#000" stroke-width="1"/>
<line x1="289" y1="159.5" x2="296" y2="159.5" stroke="#000" stroke-width="1"/>
<rect x="1089" y="159" width="469" height="592" fill="#fff"/>
<line x1="1089" y1="691.5" x2="1558" y2="691.5" stroke="#d4d4d4" stroke-width="1" stroke-dasharray="4,1"/>
<line x1="1089" y1="656.5" x2="1558" y2="656.5" stroke="#d4d4d4" stroke-width="1" stroke-dasharray="4,1"/>
<line x1="1089" y1="632.5" x2="1558" y2="632.5" stroke="#d4d4d4" stroke-width="1" stroke-dasharray="4,1"/>
<line x1="1089" y1="613.5" x2="1558" y2="613.5" stroke="#d4d4d4" stroke-width="1" stroke-dasharray="4,1"/>
<line x1="1089" y1="597.5" x2="1558" y2="597.5" stroke="#d4d4d4" stroke-width="1" stroke-dasharray="4,1"/>
<line x1="1089" y1="584.5" x2="1558" y2="584.5" stroke="#d4d4d4" stroke-width="1" stroke-dasharray="4,1"/>
<line x1="1089" y1="572.5" x2="1558" y2="572.5" stroke="#d4d4d4" stroke-width="1" stroke-dasharray="4,1"/>
<line x1="1089" y1="562.5" x2="1558" y2="562.5" stroke="#d4d4d4" stroke-width="1" stroke-dasharray="4,1"/>
<line x1="1089" y1="494.5" x2="1558" y2="494.5" stroke="#d4d4d4" stroke-width="1" stroke-dasharray="4,1"/>
<line x1="1089" y1="459.5" x2="1558" y2="459.5" stroke="#d4d4d4" stroke-width="1" stroke-dasharray="4,1"/>
<line x1="1089" y1="434.5" x2="1558" y2="434.5" stroke="#d4d4d4" stroke-width="1" stroke-dasharray="4,1"/>
<line x1="1089" y1="415.5" x2="1558" y2="415.5" stroke="#d4d4d4" stroke-width="1" stroke-dasharray="4,1"/>
<line x1="1089" y1="400.5" x2="1558" y2="400.5" stroke="#d4d4d4" stroke-width="1" stroke-dasharray="4,1"/>
<line x1="1089" y1="386.5" x2="1558" y2="386.5" stroke="#d4d4d4" stroke-width="1" stroke-dasharray="4,1"/>
<line x1="1089" y1="375.5" x2="1558" y2="375.5" stroke="#d4d4d4" stroke-width="1" stroke-dasharray="4,1"/>
<line x1="1089" y1="365.5" x2="1558" y2="365.5" stroke="#d4d4d4" stroke-width="1" stroke-dasharray="4,1"/>
<line x1="1089" y1="296.5" x2="1558" y2="296.5" stroke="#d4d4d4" stroke-width="1" stroke-dasharray="4,1"/>
<line x1="1089" y1="262.5" x2="1558" y2="262.5" stroke="#d4d4d4" stroke-width="1" stroke-dasharray="4,1"/>
<line x1="1089" y1="237.5" x2="1558" y2="237.5" stroke="#d4d4d4" stroke-width="1" stroke-dasharray="4,1"/>
<line x1="1089" y1="218.5" x2="1558" y2="218.5" stroke="#d4d4d4" stroke-width="1" stroke-dasharray="4,1"/>
<line x1="1089" y1="202.5" x2="1558" y2="202.5" stroke="#d4d4d4" stroke-width="1" stroke-dasharray="4,1"/>
<line x1="1089" y1="189.5" x2="1558" y2="189.5" stroke="#d4d4d4" stroke-width="1" stroke-dasharray="4,1"/>
<line x1="1089" y1="178.5" x2="1558" y2="178.5" stroke="#d4d4d4" stroke-width="1" stroke-dasharray="4,1"/>
<line x1="1089" y1="168.5" x2="1558" y2="168.5" stroke="#d4d4d4" stroke-width="1" stroke-dasharray="4,1"/>
<line x1="1089" y1="553.5" x2="1558" y2="553.5" stroke="#c0c0c0" stroke-width="1"/>
<line x1="1089" y1="356.5" x2="1558" y2="356.5" stroke="#c0c0c0" stroke-width="1"/>
<line x1="1132.5" y1="159" x2="1132.5" y2="751" stroke="#c0c0c0" stroke-width="1"/>
<line x1="1191.5" y1="159" x2="1191.5" y2="751" stroke="#c0c0c0" stroke-width="1"/>
<line x1="1263.5" y1="159" x2="1263.5" y2="751" stroke="#c0c0c0" stroke-width="1"/>
<line x1="1335.5" y1="159" x2="1335.5" y2="751" stroke="#c0c0c0" stroke-width="1"/>
<line x1="1394.5" y1="159" x2="1394.5" y2="751" stroke="#c0c0c0" stroke-width="1"/>
<line x1="1437.5" y1="159" x2="1437.5" y2="751" stroke="#c0c0c0" stroke-width="1"/>
<line x1="1473.5" y1="159" x2="1473.5" y2="751" stroke="#c0c0c0" stroke-width="1"/>
<line x1="1504.5" y1="159" x2="1504.5" y2="751" stroke="#c0c0c0" stroke-width="1"/>
<line x1="1531.5" y1="159" x2="1531.5" y2="751" stroke="#c0c0c0" stroke-width="1"/>
<path d="M1132.60,563.52 L1134.10,562.43 L1135.60,561.33 L1137.10,560.23 L1138.60,559.13 L1140.10,558.03 L1141.60,556.93 L1143.10,555.82 L1144.60,554.72 L1146.10,553.61 L1147.60,552.50 L1149.10,551.40 L1150.60,550.29 L1152.10,549.18 L1153.60,548.07 L1155.10,546.96 L1156.60,545.84 L1158.10,544.73 L1159.60,543.62 L1161.10,542.50 L1162.60,541.39 L1164.10,540.27 L1165.60,539.15 L1167.10,538.03 L1168.60,536.91 L1170.10,535.79 L1171.60,534.67 L1173.10,533.55 L1174.60,532.43 L1176.10,531.31 L1177.60,530.18 L1179.10,529.06 L1180.60,527.94 L1182.10,526.81 L1183.60,525.68 L1185.10,524.56 L1186.60,523.43 L1188.10,522.30 L1189.60,521.18 L1191.10,520.05 L1192.60,518.92 L1194.10,517.79 L1195.60,516.66 L1197.10,515.53 L1198.60,514.40 L1200.10,513.27 L1201.60,512.14 L1203.10,511.01 L1204.60,509.87 L1206.10,508.74 L1207.60,507.61 L1209.10,506.48 L1210.60,505.34 L1212.10,504.21 L1213.60,503.08 L1215.10,501.94 L1216.60,500.81 L1218.10,499.68 L1219.60,498.54 L1221.10,497.41 L1222.60,496.27 L1224.10,495.14 L1225.60,494.01 L1227.10,492.87 L1228.60,491.74 L1230.10,490.60 L1231.60,489.47 L1233.10,488.33 L1234.60,487.20 L1236.10,486.06 L1237.60,484.93 L1239.10,483.80 L1240.60,482.66 L1242.10,481.53 L1243.60,480.39 L1245.10,479.26 L1246.60,478.13 L1248.10,476.99 L1249.60,475.86 L1251.10,474.73 L1252.60,473.60 L1254.10,472.46 L1255.60,471.33 L1257.10,470.20 L1258.60,469.07 L1260.10,467.94 L1261.60,466.81 L1263.10,465.68 L1264.60,464.55 L1266.10,463.42 L1267.60,462.29 L1269.10,461.16 L1270.60,460.03 L1272.10,458.91 L1273.60,457.78 L1275.10,456.65 L1276.60,455.53 L1278.10,454.40 L1279.60,453.28 L1281.10,452.16 L1282.60,451.03 L1284.10,449.91 L1285.60,448.79 L1287.10,447.67 L1288.60,446.55 L1290.10,445.43 L1291.60,444.31 L1293.10,443.19 L1294.60,442.07 L1296.10,440.96 L1297.60,439.84 L1299.10,438.73 L1300.60,437.61 L1302.10,436.50 L1303.60,435.39 L1305.10,434.28 L1306.60,433.16 L1308.10,432.06 L1309.60,430.95 L1311.10,429.84 L1312.60,428.73 L1314.10,427.63 L1315.60,426.52 L1317.10,425.42 L1318.60,424.32 L1320.10,423.22 L1321.60,422.12 L1323.10,421.02 L1324.60,419.92 L1326.10,418.82 L1327.60,417.73 L1329.10,416.63 L1330.60,415.54 L1332.10,414.45 L1333.60,413.36 L1335.10,412.27 L1336.60,411.18 L1338.10,410.09 L1339.60,409.00 L1341.10,407.92 L1342.60,406.83 L1344.10,405.75 L1345.60,404.67 L1347.10,403.58 L1348.60,402.50 L1350.10,401.42 L1351.60,400.34 L1353.10,399.26 L1354.60,398.19 L1356.10,397.11 L1357.60,396.03 L1359.10,394.96 L1360.60,393.88 L1362.10,392.81 L1363.60,391.73 L1365.10,390.66 L1366.60,389.59 L1368.10,388.52 L1369.60,387.45 L1371.10,386.38 L1372.60,385.31 L1374.10,384.24 L1375.60,383.17 L1377.10,382.10 L1378.60,381.03 L1380.10,379.97 L1381.60,378.90 L1383.10,377.83 L1384.60,376.77 L1386.10,375.70 L1387.60,374.64 L1389.10,373.57 L1390.60,372.51 L1392.10,371.44 L1393.60,370.38 L1395.10,369.32 L1396.60,368.25 L1398.10,367.19 L1399.60,366.13 L1401.10,365.07 L1402.60,364.00 L1404.10,362.94 L1405.60,361.88 L1407.10,360.82 L1408.60,359.76 L1410.10,358.69 L1411.60,357.63 L1413.10,356.57 L1414.60,355.51 L1416.10,354.45 L1417.60,353.39 L1419.10,352.32 L1420.60,351.26 L1422.10,350.20 L1423.60,349.14 L1425.10,348.08 L1426.60,347.01 L1428.10,345.95 L1429.60,344.89 L1431.10,343.83 L1432.60,342.76 L1434.10,341.70 L1435.60,340.64 L1437.10,339.57 L1438.60,338.51 L1440.10,337.44 L1441.60,336.38 L1443.10,335.32 L1444.60,334.25 L1446.10,333.18 L1447.60,332.12 L1449.10,331.05 L1450.60,329.98 L1452.10,328.92 L1453.60,327.85 L1455.10,326.78 L1456.60,325.71 L1458.10,324.64 L1459.60,323.57 L1461.10,322.50 L1462.60,321.43 L1464.10,320.36 L1465.60,319.29 L1467.10,318.21 L1468.60,317.14 L1470.10,316.06 L1471.60,314.99 L1473.10,313.91 L1474.60,312.84 L1476.10,311.76 L1477.60,310.68 L1479.10,309.60 L1480.60,308.52 L1482.10,307.44 L1483.60,306.36 L1485.10,305.27 L1486.60,304.19 L1488.10,303.11 L1489.60,302.02 L1491.10,300.93 L1492.60,299.85 L1494.10,298.76 L1495.60,297.67 L1497.10,296.58 L1498.60,295.49 L1500.10,294.39 L1501.60,293.30 L1503.10,292.20 L1504.60,291.11 L1506.10,290.01 L1507.60,288.91 L1509.10,287.81 L1510.60,286.71 L1512.10,285.61 L1513.60,284.51 L1515.10,283.40 L1516.60,282.29 L1518.10,281.19 L1519.60,280.08 L1521.10,278.97 L1522.60,277.86 L1524.10,276.74 L1525.60,275.63 L1527.10,274.51 L1528.60,273.40 L1530.10,272.28 L1531.60,271.16 L1531.60,305.17 L1530.10,305.82 L1528.60,306.48 L1527.10,307.14 L1525.60,307.81 L1524.10,308.48 L1522.60,309.16 L1521.10,309.84 L1519.60,310.53 L1518.10,311.22 L1516.60,311.92 L1515.10,312.62 L1513.60,313.33 L1512.10,314.04 L1510.60,314.76 L1509.10,315.48 L1507.60,316.20 L1506.10,316.94 L1504.60,317.67 L1503.10,318.41 L1501.60,319.16 L1500.10,319.91 L1498.60,320.67 L1497.10,321.43 L1495.60,322.19 L1494.10,322.96 L1492.60,323.73 L1491.10,324.51 L1489.60,325.29 L1488.10,326.08 L1486.60,326.87 L1485.10,327.67 L1483.60,328.47 L1482.10,329.27 L1480.60,330.08 L1479.10,330.90 L1477.60,331.71 L1476.10,332.54 L1474.60,333.36 L1473.10,334.19 L1471.60,335.03 L1470.10,335.86 L1468.60,336.71 L1467.10,337.55 L1465.60,338.40 L1464.10,339.26 L1462.60,340.12 L1461.10,340.98 L1459.60,341.85 L1458.10,342.72 L1456.60,343.59 L1455.10,344.47 L1453.60,345.35 L1452.10,346.24 L1450.60,347.13 L1449.10,348.02 L1447.60,348.92 L1446.10,349.82 L1444.60,350.72 L1443.10,351.63 L1441.60,352.54 L1440.10,353.46 L1438.60,354.38 L1437.10,355.30 L1435.60,356.23 L1434.10,357.15 L1432.60,358.09 L1431.10,359.02 L1429.60,359.96 L1428.10,360.91 L1426.60,361.85 L1425.10,362.80 L1423.60,363.75 L1422.10,364.71 L1420.60,365.67 L1419.10,366.63 L1417.60,367.60 L1416.10,368.57 L1414.60,369.54 L1413.10,370.51 L1411.60,371.49 L1410.10,372.47 L1408.60,373.46 L1407.10,374.44 L1405.60,375.43 L1404.10,376.43 L1402.60,377.42 L1401.10,378.42 L1399.60,379.42 L1398.10,380.43 L1396.60,381.44 L1395.10,382.45 L1393.60,383.46 L1392.10,384.48 L1390.60,385.49 L1389.10,386.51 L1387.60,387.54 L1386.10,388.56 L1384.60,389.59 L1383.10,390.62 L1381.60,391.66 L1380.10,392.69 L1378.60,393.73 L1377.10,394.78 L1375.60,395.82 L1374.10,396.87 L1372.60,397.91 L1371.10,398.97 L1369.60,400.02 L1368.10,401.08 L1366.60,402.13 L1365.10,403.19 L1363.60,404.26 L1362.10,405.32 L1360.60,406.39 L1359.10,407.46 L1357.60,408.53 L1356.10,409.60 L1354.60,410.68 L1353.10,411.76 L1351.60,412.84 L1350.10,413.92 L1348.60,415.01 L1347.10,416.09 L1345.60,417.18 L1344.10,418.27 L1342.60,419.36 L1341.10,420.46 L1339.60,421.55 L1338.10,422.65 L1336.60,423.75 L1335.10,424.85 L1333.60,425.96 L1332.10,427.06 L1330.60,428.17 L1329.10,429.28 L1327.60,430.39 L1326.10,431.50 L1324.60,432.62 L1323.10,433.73 L1321.60,434.85 L1320.10,435.97 L1318.60,437.09 L1317.10,438.21 L1315.60,439.33 L1314.10,440.46 L1312.60,441.59 L1311.10,442.71 L1309.60,443.84 L1308.10,444.97 L1306.60,446.11 L1305.10,447.24 L1303.60,448.38 L1302.10,449.51 L1300.60,450.65 L1299.10,451.79 L1297.60,452.93 L1296.10,454.07 L1294.60,455.21 L1293.10,456.36 L1291.60,457.50 L1290.10,458.65 L1288.60,459.80 L1287.10,460.94 L1285.60,462.09 L1284.10,463.25 L1282.60,464.40 L1281.10,465.55 L1279.60,466.70 L1278.10,467.86 L1276.60,469.02 L1275.10,470.18 L1273.60,471.34 L1272.10,472.51 L1270.60,473.68 L1269.10,474.85 L1267.60,476.02 L1266.10,477.20 L1264.60,478.38 L1263.10,479.57 L1261.60,480.75 L1260.10,481.95 L1258.60,483.15 L1257.10,484.35 L1255.60,485.55 L1254.10,486.76 L1252.60,487.98 L1251.10,489.20 L1249.60,490.43 L1248.10,491.66 L1246.60,492.90 L1245.10,494.15 L1243.60,495.40 L1242.10,496.66 L1240.60,497.92 L1239.10,499.19 L1237.60,500.47 L1236.10,501.75 L1234.60,503.04 L1233.10,504.33 L1231.60,505.63 L1230.10,506.94 L1228.60,508.25 L1227.10,509.56 L1225.60,510.89 L1224.10,512.21 L1222.60,513.55 L1221.10,514.89 L1219.60,516.23 L1218.10,517.58 L1216.60,518.94 L1215.10,520.30 L1213.60,521.67 L1212.10,523.04 L1210.60,524.41 L1209.10,525.79 L1207.60,527.18 L1206.10,528.57 L1204.60,529.97 L1203.10,531.37 L1201.60,532.77 L1200.10,534.18 L1198.60,535.60 L1197.10,537.02 L1195.60,538.44 L1194.10,539.87 L1192.60,541.31 L1191.10,542.74 L1189.60,544.19 L1188.10,545.63 L1186.60,547.08 L1185.10,548.54 L1183.60,550.00 L1182.10,551.46 L1180.60,552.92 L1179.10,554.40 L1177.60,555.87 L1176.10,557.35 L1174.60,558.83 L1173.10,560.32 L1171.60,561.81 L1170.10,563.30 L1168.60,564.80 L1167.10,566.30 L1165.60,567.80 L1164.10,569.31 L1162.60,570.82 L1161.10,572.33 L1159.60,573.85 L1158.10,575.37 L1156.60,576.89 L1155.10,578.42 L1153.60,579.95 L1152.10,581.48 L1150.60,583.02 L1149.10,584.56 L1147.60,586.10 L1146.10,587.64 L1144.60,589.19 L1143.10,590.74 L1141.60,592.29 L1140.10,593.84 L1138.60,595.40 L1137.10,596.96 L1135.60,598.52 L1134.10,600.09 L1132.60,601.65 Z" fill="#afc2d2" fill-opacity="0.55" stroke="none"/>
<path d="M1132.60,563.52 L1134.10,562.43 L1135.60,561.33 L1137.10,560.23 L1138.60,559.13 L1140.10,558.03 L1141.60,556.93 L1143.10,555.82 L1144.60,554.72 L1146.10,553.61 L1147.60,552.50 L1149.10,551.40 L1150.60,550.29 L1152.10,549.18 L1153.60,548.07 L1155.10,546.96 L1156.60,545.84 L1158.10,544.73 L1159.60,543.62 L1161.10,542.50 L1162.60,541.39 L1164.10,540.27 L1165.60,539.15 L1167.10,538.03 L1168.60,536.91 L1170.10,535.79 L1171.60,534.67 L1173.10,533.55 L1174.60,532.43 L1176.10,531.31 L1177.60,530.18 L1179.10,529.06 L1180.60,527.94 L1182.10,526.81 L1183.60,525.68 L1185.10,524.56 L1186.60,523.43 L1188.10,522.30 L1189.60,521.18 L1191.10,520.05 L1192.60,518.92 L1194.10,517.79 L1195.60,516.66 L1197.10,515.53 L1198.60,514.40 L1200.10,513.27 L1201.60,512.14 L1203.10,511.01 L1204.60,509.87 L1206.10,508.74 L1207.60,507.61 L1209.10,506.48 L1210.60,505.34 L1212.10,504.21 L1213.60,503.08 L1215.10,501.94 L1216.60,500.81 L1218.10,499.68 L1219.60,498.54 L1221.10,497.41 L1222.60,496.27 L1224.10,495.14 L1225.60,494.01 L1227.10,492.87 L1228.60,491.74 L1230.10,490.60 L1231.60,489.47 L1233.10,488.33 L1234.60,487.20 L1236.10,486.06 L1237.60,484.93 L1239.10,483.80 L1240.60,482.66 L1242.10,481.53 L1243.60,480.39 L1245.10,479.26 L1246.60,478.13 L1248.10,476.99 L1249.60,475.86 L1251.10,474.73 L1252.60,473.60 L1254.10,472.46 L1255.60,471.33 L1257.10,470.20 L1258.60,469.07 L1260.10,467.94 L1261.60,466.81 L1263.10,465.68 L1264.60,464.55 L1266.10,463.42 L1267.60,462.29 L1269.10,461.16 L1270.60,460.03 L1272.10,458.91 L1273.60,457.78 L1275.10,456.65 L1276.60,455.53 L1278.10,454.40 L1279.60,453.28 L1281.10,452.16 L1282.60,451.03 L1284.10,449.91 L1285.60,448.79 L1287.10,447.67 L1288.60,446.55 L1290.10,445.43 L1291.60,444.31 L1293.10,443.19 L1294.60,442.07 L1296.10,440.96 L1297.60,439.84 L1299.10,438.73 L1300.60,437.61 L1302.10,436.50 L1303.60,435.39 L1305.10,434.28 L1306.60,433.16 L1308.10,432.06 L1309.60,430.95 L1311.10,429.84 L1312.60,428.73 L1314.10,427.63 L1315.60,426.52 L1317.10,425.42 L1318.60,424.32 L1320.10,423.22 L1321.60,422.12 L1323.10,421.02 L1324.60,419.92 L1326.10,418.82 L1327.60,417.73 L1329.10,416.63 L1330.60,415.54 L1332.10,414.45 L1333.60,413.36 L1335.10,412.27 L1336.60,411.18 L1338.10,410.09 L1339.60,409.00 L1341.10,407.92 L1342.60,406.83 L1344.10,405.75 L1345.60,404.67 L1347.10,403.58 L1348.60,402.50 L1350.10,401.42 L1351.60,400.34 L1353.10,399.26 L1354.60,398.19 L1356.10,397.11 L1357.60,396.03 L1359.10,394.96 L1360.60,393.88 L1362.10,392.81 L1363.60,391.73 L1365.10,390.66 L1366.60,389.59 L1368.10,388.52 L1369.60,387.45 L1371.10,386.38 L1372.60,385.31 L1374.10,384.24 L1375.60,383.17 L1377.10,382.10 L1378.60,381.03 L1380.10,379.97 L1381.60,378.90 L1383.10,377.83 L1384.60,376.77 L1386.10,375.70 L1387.60,374.64 L1389.10,373.57 L1390.60,372.51 L1392.10,371.44 L1393.60,370.38 L1395.10,369.32 L1396.60,368.25 L1398.10,367.19 L1399.60,366.13 L1401.10,365.07 L1402.60,364.00 L1404.10,362.94 L1405.60,361.88 L1407.10,360.82 L1408.60,359.76 L1410.10,358.69 L1411.60,357.63 L1413.10,356.57 L1414.60,355.51 L1416.10,354.45 L1417.60,353.39 L1419.10,352.32 L1420.60,351.26 L1422.10,350.20 L1423.60,349.14 L1425.10,348.08 L1426.60,347.01 L1428.10,345.95 L1429.60,344.89 L1431.10,343.83 L1432.60,342.76 L1434.10,341.70 L1435.60,340.64 L1437.10,339.57 L1438.60,338.51 L1440.10,337.44 L1441.60,336.38 L1443.10,335.32 L1444.60,334.25 L1446.10,333.18 L1447.60,332.12 L1449.10,331.05 L1450.60,329.98 L1452.10,328.92 L1453.60,327.85 L1455.10,326.78 L1456.60,325.71 L1458.10,324.64 L1459.60,323.57 L1461.10,322.50 L1462.60,321.43 L1464.10,320.36 L1465.60,319.29 L1467.10,318.21 L1468.60,317.14 L1470.10,316.06 L1471.60,314.99 L1473.10,313.91 L1474.60,312.84 L1476.10,311.76 L1477.60,310.68 L1479.10,309.60 L1480.60,308.52 L1482.10,307.44 L1483.60,306.36 L1485.10,305.27 L1486.60,304.19 L1488.10,303.11 L1489.60,302.02 L1491.10,300.93 L1492.60,299.85 L1494.10,298.76 L1495.60,297.67 L1497.10,296.58 L1498.60,295.49 L1500.10,294.39 L1501.60,293.30 L1503.10,292.20 L1504.60,291.11 L1506.10,290.01 L1507.60,288.91 L1509.10,287.81 L1510.60,286.71 L1512.10,285.61 L1513.60,284.51 L1515.10,283.40 L1516.60,282.29 L1518.10,281.19 L1519.60,280.08 L1521.10,278.97 L1522.60,277.86 L1524.10,276.74 L1525.60,275.63 L1527.10,274.51 L1528.60,273.40 L1530.10,272.28 L1531.60,271.16" fill="none" stroke="#44548f" stroke-width="1.25"/>
<path d="M1132.60,601.65 L1134.10,600.09 L1135.60,598.52 L1137.10,596.96 L1138.60,595.40 L1140.10,593.84 L1141.60,592.29 L1143.10,590.74 L1144.60,589.19 L1146.10,587.64 L1147.60,586.10 L1149.10,584.56 L1150.60,583.02 L1152.10,581.48 L1153.60,579.95 L1155.10,578.42 L1156.60,576.89 L1158.10,575.37 L1159.60,573.85 L1161.10,572.33 L1162.60,570.82 L1164.10,569.31 L1165.60,567.80 L1167.10,566.30 L1168.60,564.80 L1170.10,563.30 L1171.60,561.81 L1173.10,560.32 L1174.60,558.83 L1176.10,557.35 L1177.60,555.87 L1179.10,554.40 L1180.60,552.92 L1182.10,551.46 L1183.60,550.00 L1185.10,548.54 L1186.60,547.08 L1188.10,545.63 L1189.60,544.19 L1191.10,542.74 L1192.60,541.31 L1194.10,539.87 L1195.60,538.44 L1197.10,537.02 L1198.60,535.60 L1200.10,534.18 L1201.60,532.77 L1203.10,531.37 L1204.60,529.97 L1206.10,528.57 L1207.60,527.18 L1209.10,525.79 L1210.60,524.41 L1212.10,523.04 L1213.60,521.67 L1215.10,520.30 L1216.60,518.94 L1218.10,517.58 L1219.60,516.23 L1221.10,514.89 L1222.60,513.55 L1224.10,512.21 L1225.60,510.89 L1227.10,509.56 L1228.60,508.25 L1230.10,506.94 L1231.60,505.63 L1233.10,504.33 L1234.60,503.04 L1236.10,501.75 L1237.60,500.47 L1239.10,499.19 L1240.60,497.92 L1242.10,496.66 L1243.60,495.40 L1245.10,494.15 L1246.60,492.90 L1248.10,491.66 L1249.60,490.43 L1251.10,489.20 L1252.60,487.98 L1254.10,486.76 L1255.60,485.55 L1257.10,484.35 L1258.60,483.15 L1260.10,481.95 L1261.60,480.75 L1263.10,479.57 L1264.60,478.38 L1266.10,477.20 L1267.60,476.02 L1269.10,474.85 L1270.60,473.68 L1272.10,472.51 L1273.60,471.34 L1275.10,470.18 L1276.60,469.02 L1278.10,467.86 L1279.60,466.70 L1281.10,465.55 L1282.60,464.40 L1284.10,463.25 L1285.60,462.09 L1287.10,460.94 L1288.60,459.80 L1290.10,458.65 L1291.60,457.50 L1293.10,456.36 L1294.60,455.21 L1296.10,454.07 L1297.60,452.93 L1299.10,451.79 L1300.60,450.65 L1302.10,449.51 L1303.60,448.38 L1305.10,447.24 L1306.60,446.11 L1308.10,444.97 L1309.60,443.84 L1311.10,442.71 L1312.60,441.59 L1314.10,440.46 L1315.60,439.33 L1317.10,438.21 L1318.60,437.09 L1320.10,435.97 L1321.60,434.85 L1323.10,433.73 L1324.60,432.62 L1326.10,431.50 L1327.60,430.39 L1329.10,429.28 L1330.60,428.17 L1332.10,427.06 L1333.60,425.96 L1335.10,424.85 L1336.60,423.75 L1338.10,422.65 L1339.60,421.55 L1341.10,420.46 L1342.60,419.36 L1344.10,418.27 L1345.60,417.18 L1347.10,416.09 L1348.60,415.01 L1350.10,413.92 L1351.60,412.84 L1353.10,411.76 L1354.60,410.68 L1356.10,409.60 L1357.60,408.53 L1359.10,407.46 L1360.60,406.39 L1362.10,405.32 L1363.60,404.26 L1365.10,403.19 L1366.60,402.13 L1368.10,401.08 L1369.60,400.02 L1371.10,398.97 L1372.60,397.91 L1374.10,396.87 L1375.60,395.82 L1377.10,394.78 L1378.60,393.73 L1380.10,392.69 L1381.60,391.66 L1383.10,390.62 L1384.60,389.59 L1386.10,388.56 L1387.60,387.54 L1389.10,386.51 L1390.60,385.49 L1392.10,384.48 L1393.60,383.46 L1395.10,382.45 L1396.60,381.44 L1398.10,380.43 L1399.60,379.42 L1401.10,378.42 L1402.60,377.42 L1404.10,376.43 L1405.60,375.43 L1407.10,374.44 L1408.60,373.46 L1410.10,372.47 L1411.60,371.49 L1413.10,370.51 L1414.60,369.54 L1416.10,368.57 L1417.60,367.60 L1419.10,366.63 L1420.60,365.67 L1422.10,364.71 L1423.60,363.75 L1425.10,362.80 L1426.60,361.85 L1428.10,360.91 L1429.60,359.96 L1431.10,359.02 L1432.60,358.09 L1434.10,357.15 L1435.60,356.23 L1437.10,355.30 L1438.60,354.38 L1440.10,353.46 L1441.60,352.54 L1443.10,351.63 L1444.60,350.72 L1446.10,349.82 L1447.60,348.92 L1449.10,348.02 L1450.60,347.13 L1452.10,346.24 L1453.60,345.35 L1455.10,344.47 L1456.60,343.59 L1458.10,342.72 L1459.60,341.85 L1461.10,340.98 L1462.60,340.12 L1464.10,339.26 L1465.60,338.40 L1467.10,337.55 L1468.60,336.71 L1470.10,335.86 L1471.60,335.03 L1473.10,334.19 L1474.60,333.36 L1476.10,332.54 L1477.60,331.71 L1479.10,330.90 L1480.60,330.08 L1482.10,329.27 L1483.60,328.47 L1485.10,327.67 L1486.60,326.87 L1488.10,326.08 L1489.60,325.29 L1491.10,324.51 L1492.60,323.73 L1494.10,322.96 L1495.60,322.19 L1497.10,321.43 L1498.60,320.67 L1500.10,319.91 L1501.60,319.16 L1503.10,318.41 L1504.60,317.67 L1506.10,316.94 L1507.60,316.20 L1509.10,315.48 L1510.60,314.76 L1512.10,314.04 L1513.60,313.33 L1515.10,312.62 L1516.60,311.92 L1518.10,311.22 L1519.60,310.53 L1521.10,309.84 L1522.60,309.16 L1524.10,308.48 L1525.60,307.81 L1527.10,307.14 L1528.60,306.48 L1530.10,305.82 L1531.60,305.17" fill="none" stroke="#44548f" stroke-width="1.25"/>
<path d="M1132.60,580.44 L1134.10,579.19 L1135.60,577.93 L1137.10,576.68 L1138.60,575.43 L1140.10,574.18 L1141.60,572.93 L1143.10,571.68 L1144.60,570.43 L1146.10,569.19 L1147.60,567.94 L1149.10,566.69 L1150.60,565.45 L1152.10,564.20 L1153.60,562.96 L1155.10,561.72 L1156.60,560.48 L1158.10,559.23 L1159.60,557.99 L1161.10,556.75 L1162.60,555.51 L1164.10,554.28 L1165.60,553.04 L1167.10,551.80 L1168.60,550.57 L1170.10,549.33 L1171.60,548.10 L1173.10,546.87 L1174.60,545.63 L1176.10,544.40 L1177.60,543.17 L1179.10,541.94 L1180.60,540.71 L1182.10,539.48 L1183.60,538.26 L1185.10,537.03 L1186.60,535.80 L1188.10,534.58 L1189.60,533.36 L1191.10,532.13 L1192.60,530.91 L1194.10,529.69 L1195.60,528.47 L1197.10,527.25 L1198.60,526.03 L1200.10,524.81 L1201.60,523.60 L1203.10,522.38 L1204.60,521.17 L1206.10,519.95 L1207.60,518.74 L1209.10,517.53 L1210.60,516.31 L1212.10,515.10 L1213.60,513.90 L1215.10,512.69 L1216.60,511.48 L1218.10,510.27 L1219.60,509.07 L1221.10,507.86 L1222.60,506.66 L1224.10,505.46 L1225.60,504.25 L1227.10,503.05 L1228.60,501.85 L1230.10,500.65 L1231.60,499.46 L1233.10,498.26 L1234.60,497.06 L1236.10,495.87 L1237.60,494.67 L1239.10,493.48 L1240.60,492.29 L1242.10,491.10 L1243.60,489.91 L1245.10,488.72 L1246.60,487.53 L1248.10,486.34 L1249.60,485.16 L1251.10,483.97 L1252.60,482.79 L1254.10,481.61 L1255.60,480.42 L1257.10,479.24 L1258.60,478.06 L1260.10,476.89 L1261.60,475.71 L1263.10,474.53 L1264.60,473.36 L1266.10,472.18 L1267.60,471.01 L1269.10,469.84 L1270.60,468.66 L1272.10,467.49 L1273.60,466.33 L1275.10,465.16 L1276.60,463.99 L1278.10,462.82 L1279.60,461.66 L1281.10,460.50 L1282.60,459.33 L1284.10,458.17 L1285.60,457.01 L1287.10,455.85 L1288.60,454.70 L1290.10,453.54 L1291.60,452.38 L1293.10,451.23 L1294.60,450.08 L1296.10,448.92 L1297.60,447.77 L1299.10,446.62 L1300.60,445.47 L1302.10,444.33 L1303.60,443.18 L1305.10,442.03 L1306.60,440.89 L1308.10,439.75 L1309.60,438.60 L1311.10,437.46 L1312.60,436.32 L1314.10,435.19 L1315.60,434.05 L1317.10,432.91 L1318.60,431.78 L1320.10,430.65 L1321.60,429.51 L1323.10,428.38 L1324.60,427.25 L1326.10,426.12 L1327.60,425.00 L1329.10,423.87 L1330.60,422.75 L1332.10,421.62 L1333.60,420.50 L1335.10,419.38 L1336.60,418.26 L1338.10,417.14 L1339.60,416.02 L1341.10,414.91 L1342.60,413.79 L1344.10,412.68 L1345.60,411.57 L1347.10,410.46 L1348.60,409.35 L1350.10,408.24 L1351.60,407.13 L1353.10,406.02 L1354.60,404.92 L1356.10,403.82 L1357.60,402.71 L1359.10,401.61 L1360.60,400.51 L1362.10,399.42 L1363.60,398.32 L1365.10,397.22 L1366.60,396.13 L1368.10,395.04 L1369.60,393.95 L1371.10,392.86 L1372.60,391.77 L1374.10,390.68 L1375.60,389.59 L1377.10,388.51 L1378.60,387.43 L1380.10,386.34 L1381.60,385.26 L1383.10,384.18 L1384.60,383.11 L1386.10,382.03 L1387.60,380.96 L1389.10,379.88 L1390.60,378.81 L1392.10,377.74 L1393.60,376.67 L1395.10,375.60 L1396.60,374.53 L1398.10,373.47 L1399.60,372.40 L1401.10,371.34 L1402.60,370.28 L1404.10,369.22 L1405.60,368.16 L1407.10,367.11 L1408.60,366.05 L1410.10,365.00 L1411.60,363.95 L1413.10,362.89 L1414.60,361.84 L1416.10,360.80 L1417.60,359.75 L1419.10,358.71 L1420.60,357.66 L1422.10,356.62 L1423.60,355.58 L1425.10,354.54 L1426.60,353.50 L1428.10,352.47 L1429.60,351.43 L1431.10,350.40 L1432.60,349.37 L1434.10,348.34 L1435.60,347.31 L1437.10,346.28 L1438.60,345.25 L1440.10,344.23 L1441.60,343.21 L1443.10,342.19 L1444.60,341.17 L1446.10,340.15 L1447.60,339.13 L1449.10,338.12 L1450.60,337.10 L1452.10,336.09 L1453.60,335.08 L1455.10,334.07 L1456.60,333.06 L1458.10,332.06 L1459.60,331.05 L1461.10,330.05 L1462.60,329.05 L1464.10,328.05 L1465.60,327.05 L1467.10,326.05 L1468.60,325.06 L1470.10,324.06 L1471.60,323.07 L1473.10,322.07 L1474.60,321.08 L1476.10,320.09 L1477.60,319.10 L1479.10,318.11 L1480.60,317.12 L1482.10,316.14 L1483.60,315.15 L1485.10,314.16 L1486.60,313.18 L1488.10,312.19 L1489.60,311.21 L1491.10,310.22 L1492.60,309.24 L1494.10,308.26 L1495.60,307.27 L1497.10,306.29 L1498.60,305.31 L1500.10,304.33 L1501.60,303.35 L1503.10,302.37 L1504.60,301.38 L1506.10,300.40 L1507.60,299.42 L1509.10,298.44 L1510.60,297.46 L1512.10,296.48 L1513.60,295.50 L1515.10,294.52 L1516.60,293.53 L1518.10,292.55 L1519.60,291.57 L1521.10,290.59 L1522.60,289.60 L1524.10,288.62 L1525.60,287.64 L1527.10,286.65 L1528.60,285.67 L1530.10,284.68 L1531.60,283.69" fill="none" stroke="#0000ff" stroke-width="1.2" stroke-dasharray="3.5,1.5"/>
<path d="M1132.60,578.70 L1134.10,577.48 L1135.60,576.26 L1137.10,575.04 L1138.60,573.82 L1140.10,572.60 L1141.60,571.37 L1143.10,570.15 L1144.60,568.93 L1146.10,567.71 L1147.60,566.49 L1149.10,565.27 L1150.60,564.05 L1152.10,562.83 L1153.60,561.61 L1155.10,560.39 L1156.60,559.17 L1158.10,557.95 L1159.60,556.73 L1161.10,555.52 L1162.60,554.30 L1164.10,553.08 L1165.60,551.86 L1167.10,550.65 L1168.60,549.43 L1170.10,548.21 L1171.60,547.00 L1173.10,545.78 L1174.60,544.56 L1176.10,543.35 L1177.60,542.14 L1179.10,540.92 L1180.60,539.71 L1182.10,538.49 L1183.60,537.28 L1185.10,536.07 L1186.60,534.86 L1188.10,533.65 L1189.60,532.44 L1191.10,531.22 L1192.60,530.01 L1194.10,528.81 L1195.60,527.60 L1197.10,526.39 L1198.60,525.18 L1200.10,523.97 L1201.60,522.77 L1203.10,521.56 L1204.60,520.36 L1206.10,519.15 L1207.60,517.95 L1209.10,516.74 L1210.60,515.54 L1212.10,514.34 L1213.60,513.14 L1215.10,511.94 L1216.60,510.74 L1218.10,509.54 L1219.60,508.34 L1221.10,507.14 L1222.60,505.94 L1224.10,504.74 L1225.60,503.55 L1227.10,502.35 L1228.60,501.16 L1230.10,499.97 L1231.60,498.77 L1233.10,497.58 L1234.60,496.39 L1236.10,495.20 L1237.60,494.01 L1239.10,492.82 L1240.60,491.63 L1242.10,490.45 L1243.60,489.26 L1245.10,488.07 L1246.60,486.89 L1248.10,485.71 L1249.60,484.52 L1251.10,483.34 L1252.60,482.16 L1254.10,480.98 L1255.60,479.80 L1257.10,478.62 L1258.60,477.45 L1260.10,476.27 L1261.60,475.10 L1263.10,473.92 L1264.60,472.75 L1266.10,471.58 L1267.60,470.41 L1269.10,469.24 L1270.60,468.07 L1272.10,466.90 L1273.60,465.74 L1275.10,464.57 L1276.60,463.41 L1278.10,462.24 L1279.60,461.08 L1281.10,459.92 L1282.60,458.76 L1284.10,457.60 L1285.60,456.44 L1287.10,455.29 L1288.60,454.13 L1290.10,452.98 L1291.60,451.83 L1293.10,450.68 L1294.60,449.53 L1296.10,448.38 L1297.60,447.23 L1299.10,446.08 L1300.60,444.94 L1302.10,443.79 L1303.60,442.65 L1305.10,441.51 L1306.60,440.37 L1308.10,439.23 L1309.60,438.09 L1311.10,436.96 L1312.60,435.82 L1314.10,434.69 L1315.60,433.56 L1317.10,432.43 L1318.60,431.30 L1320.10,430.17 L1321.60,429.05 L1323.10,427.92 L1324.60,426.80 L1326.10,425.68 L1327.60,424.56 L1329.10,423.44 L1330.60,422.32 L1332.10,421.20 L1333.60,420.09 L1335.10,418.98 L1336.60,417.87 L1338.10,416.76 L1339.60,415.65 L1341.10,414.54 L1342.60,413.44 L1344.10,412.33 L1345.60,411.23 L1347.10,410.13 L1348.60,409.03 L1350.10,407.94 L1351.60,406.84 L1353.10,405.75 L1354.60,404.65 L1356.10,403.56 L1357.60,402.48 L1359.10,401.39 L1360.60,400.30 L1362.10,399.22 L1363.60,398.14 L1365.10,397.06 L1366.60,395.98 L1368.10,394.90 L1369.60,393.83 L1371.10,392.76 L1372.60,391.68 L1374.10,390.61 L1375.60,389.55 L1377.10,388.48 L1378.60,387.42 L1380.10,386.35 L1381.60,385.29 L1383.10,384.24 L1384.60,383.18 L1386.10,382.12 L1387.60,381.07 L1389.10,380.02 L1390.60,378.97 L1392.10,377.93 L1393.60,376.88 L1395.10,375.84 L1396.60,374.80 L1398.10,373.76 L1399.60,372.72 L1401.10,371.68 L1402.60,370.65 L1404.10,369.62 L1405.60,368.59 L1407.10,367.56 L1408.60,366.54 L1410.10,365.51 L1411.60,364.49 L1413.10,363.47 L1414.60,362.46 L1416.10,361.44 L1417.60,360.43 L1419.10,359.42 L1420.60,358.41 L1422.10,357.41 L1423.60,356.40 L1425.10,355.40 L1426.60,354.40 L1428.10,353.40 L1429.60,352.41 L1431.10,351.41 L1432.60,350.42 L1434.10,349.43 L1435.60,348.45 L1437.10,347.46 L1438.60,346.48 L1440.10,345.50 L1441.60,344.52 L1443.10,343.55 L1444.60,342.57 L1446.10,341.60 L1447.60,340.63 L1449.10,339.67 L1450.60,338.70 L1452.10,337.74 L1453.60,336.78 L1455.10,335.82 L1456.60,334.87 L1458.10,333.91 L1459.60,332.96 L1461.10,332.01 L1462.60,331.06 L1464.10,330.12 L1465.60,329.17 L1467.10,328.23 L1468.60,327.29 L1470.10,326.35 L1471.60,325.41 L1473.10,324.48 L1474.60,323.55 L1476.10,322.62 L1477.60,321.69 L1479.10,320.76 L1480.60,319.83 L1482.10,318.91 L1483.60,317.99 L1485.10,317.07 L1486.60,316.15 L1488.10,315.23 L1489.60,314.32 L1491.10,313.40 L1492.60,312.49 L1494.10,311.58 L1495.60,310.67 L1497.10,309.76 L1498.60,308.86 L1500.10,307.96 L1501.60,307.05 L1503.10,306.15 L1504.60,305.25 L1506.10,304.35 L1507.60,303.46 L1509.10,302.56 L1510.60,301.67 L1512.10,300.78 L1513.60,299.89 L1515.10,299.00 L1516.60,298.11 L1518.10,297.22 L1519.60,296.34 L1521.10,295.45 L1522.60,294.57 L1524.10,293.69 L1525.60,292.81 L1527.10,291.93 L1528.60,291.05 L1530.10,290.18 L1531.60,289.30" fill="none" stroke="#000" stroke-width="1.15"/>
<circle cx="1405.10" cy="373.90" r="3.4" fill="#000"/>
<circle cx="1384.50" cy="391.10" r="3.4" fill="#000"/>
<circle cx="1367.08" cy="402.44" r="3.4" fill="#000"/>
<circle cx="1359.61" cy="403.15" r="3.4" fill="#000"/>
<circle cx="1353.52" cy="405.81" r="3.4" fill="#000"/>
<circle cx="1348.33" cy="406.96" r="3.4" fill="#000"/>
<circle cx="1343.77" cy="409.98" r="3.4" fill="#000"/>
<circle cx="1339.69" cy="410.97" r="3.4" fill="#000"/>
<circle cx="1335.97" cy="414.49" r="3.4" fill="#000"/>
<circle cx="1332.54" cy="418.20" r="3.4" fill="#000"/>
<circle cx="1329.35" cy="421.84" r="3.4" fill="#000"/>
<circle cx="1326.36" cy="422.74" r="3.4" fill="#000"/>
<circle cx="1323.53" cy="423.55" r="3.4" fill="#000"/>
<circle cx="1320.85" cy="424.37" r="3.4" fill="#000"/>
<circle cx="1318.29" cy="425.14" r="3.4" fill="#000"/>
<circle cx="1315.85" cy="425.89" r="3.4" fill="#000"/>
<circle cx="1313.49" cy="426.79" r="3.4" fill="#000"/>
<circle cx="1311.22" cy="427.67" r="3.4" fill="#000"/>
<circle cx="1309.03" cy="428.52" r="3.4" fill="#000"/>
<circle cx="1306.90" cy="429.51" r="3.4" fill="#000"/>
<circle cx="1304.83" cy="430.70" r="3.4" fill="#000"/>
<circle cx="1302.82" cy="431.85" r="3.4" fill="#000"/>
<circle cx="1300.85" cy="434.02" r="3.4" fill="#000"/>
<circle cx="1298.93" cy="436.62" r="3.4" fill="#000"/>
<circle cx="1297.06" cy="439.04" r="3.4" fill="#000"/>
<circle cx="1295.21" cy="440.89" r="3.4" fill="#000"/>
<circle cx="1293.40" cy="442.70" r="3.4" fill="#000"/>
<circle cx="1291.63" cy="444.27" r="3.4" fill="#000"/>
<circle cx="1289.87" cy="445.07" r="3.4" fill="#000"/>
<circle cx="1288.15" cy="445.85" r="3.4" fill="#000"/>
<circle cx="1286.45" cy="446.62" r="3.4" fill="#000"/>
<circle cx="1284.76" cy="447.64" r="3.4" fill="#000"/>
<circle cx="1283.10" cy="449.04" r="3.4" fill="#000"/>
<circle cx="1281.45" cy="450.43" r="3.4" fill="#000"/>
<circle cx="1279.82" cy="451.81" r="3.4" fill="#000"/>
<circle cx="1278.21" cy="453.19" r="3.4" fill="#000"/>
<circle cx="1276.60" cy="454.80" r="3.4" fill="#000"/>
<circle cx="1275.01" cy="456.39" r="3.4" fill="#000"/>
<circle cx="1273.42" cy="457.98" r="3.4" fill="#000"/>
<circle cx="1271.85" cy="459.55" r="3.4" fill="#000"/>
<circle cx="1270.28" cy="460.55" r="3.4" fill="#000"/>
<circle cx="1268.71" cy="461.49" r="3.4" fill="#000"/>
<circle cx="1267.15" cy="462.43" r="3.4" fill="#000"/>
<circle cx="1265.59" cy="463.43" r="3.4" fill="#000"/>
<circle cx="1264.04" cy="465.27" r="3.4" fill="#000"/>
<circle cx="1262.48" cy="467.11" r="3.4" fill="#000"/>
<circle cx="1260.93" cy="468.95" r="3.4" fill="#000"/>
<circle cx="1259.37" cy="470.77" r="3.4" fill="#000"/>
<circle cx="1257.81" cy="472.53" r="3.4" fill="#000"/>
<circle cx="1256.24" cy="474.29" r="3.4" fill="#000"/>
<circle cx="1254.67" cy="475.97" r="3.4" fill="#000"/>
<circle cx="1253.10" cy="477.14" r="3.4" fill="#000"/>
<circle cx="1251.51" cy="478.31" r="3.4" fill="#000"/>
<circle cx="1249.92" cy="479.49" r="3.4" fill="#000"/>
<circle cx="1248.31" cy="480.68" r="3.4" fill="#000"/>
<circle cx="1246.70" cy="481.88" r="3.4" fill="#000"/>
<circle cx="1245.07" cy="483.75" r="3.4" fill="#000"/>
<circle cx="1243.42" cy="486.12" r="3.4" fill="#000"/>
<circle cx="1241.76" cy="488.51" r="3.4" fill="#000"/>
<circle cx="1240.07" cy="490.94" r="3.4" fill="#000"/>
<circle cx="1238.37" cy="493.39" r="3.4" fill="#000"/>
<circle cx="1236.65" cy="495.85" r="3.4" fill="#000"/>
<circle cx="1234.89" cy="497.37" r="3.4" fill="#000"/>
<circle cx="1233.12" cy="498.92" r="3.4" fill="#000"/>
<circle cx="1231.31" cy="500.49" r="3.4" fill="#000"/>
<circle cx="1229.46" cy="502.13" r="3.4" fill="#000"/>
<circle cx="1227.59" cy="503.99" r="3.4" fill="#000"/>
<circle cx="1225.67" cy="505.88" r="3.4" fill="#000"/>
<circle cx="1223.70" cy="507.82" r="3.4" fill="#000"/>
<circle cx="1221.69" cy="509.83" r="3.4" fill="#000"/>
<circle cx="1219.62" cy="512.15" r="3.4" fill="#000"/>
<circle cx="1217.49" cy="514.33" r="3.4" fill="#000"/>
<circle cx="1215.30" cy="515.29" r="3.4" fill="#000"/>
<circle cx="1213.03" cy="516.29" r="3.4" fill="#000"/>
<circle cx="1210.67" cy="517.32" r="3.4" fill="#000"/>
<circle cx="1208.23" cy="518.50" r="3.4" fill="#000"/>
<circle cx="1205.67" cy="519.79" r="3.4" fill="#000"/>
<circle cx="1202.99" cy="521.14" r="3.4" fill="#000"/>
<circle cx="1200.16" cy="522.57" r="3.4" fill="#000"/>
<circle cx="1197.17" cy="524.93" r="3.4" fill="#000"/>
<circle cx="1193.98" cy="527.54" r="3.4" fill="#000"/>
<circle cx="1190.55" cy="529.65" r="3.4" fill="#000"/>
<circle cx="1186.83" cy="531.92" r="3.4" fill="#000"/>
<circle cx="1182.75" cy="533.10" r="3.4" fill="#000"/>
<circle cx="1178.19" cy="533.10" r="3.4" fill="#000"/>
<circle cx="1173.00" cy="560.68" r="3.4" fill="#000"/>
<circle cx="1166.91" cy="561.90" r="3.4" fill="#000"/>
<circle cx="1159.44" cy="562.96" r="3.4" fill="#000"/>
<circle cx="1149.52" cy="568.18" r="3.4" fill="#000"/>
<circle cx="1133.93" cy="579.63" r="3.4" fill="#000"/>
<rect x="1089.5" y="159.5" width="469" height="592" fill="none" stroke="#000" stroke-width="1"/>
<line x1="1082" y1="751.5" x2="1089" y2="751.5" stroke="#000" stroke-width="1"/>
<line x1="1085" y1="691.5" x2="1089" y2="691.5" stroke="#000" stroke-width="1"/>
<line x1="1085" y1="656.5" x2="1089" y2="656.5" stroke="#000" stroke-width="1"/>
<line x1="1085" y1="632.5" x2="1089" y2="632.5" stroke="#000" stroke-width="1"/>
<line x1="1085" y1="613.5" x2="1089" y2="613.5" stroke="#000" stroke-width="1"/>
<line x1="1085" y1="597.5" x2="1089" y2="597.5" stroke="#000" stroke-width="1"/>
<line x1="1085" y1="584.5" x2="1089" y2="584.5" stroke="#000" stroke-width="1"/>
<line x1="1085" y1="572.5" x2="1089" y2="572.5" stroke="#000" stroke-width="1"/>
<line x1="1085" y1="562.5" x2="1089" y2="562.5" stroke="#000" stroke-width="1"/>
<line x1="1082" y1="553.5" x2="1089" y2="553.5" stroke="#000" stroke-width="1"/>
<line x1="1085" y1="494.5" x2="1089" y2="494.5" stroke="#000" stroke-width="1"/>
<line x1="1085" y1="459.5" x2="1089" y2="459.5" stroke="#000" stroke-width="1"/>
<line x1="1085" y1="434.5" x2="1089" y2="434.5" stroke="#000" stroke-width="1"/>
<line x1="1085" y1="415.5" x2="1089" y2="415.5" stroke="#000" stroke-width="1"/>
<line x1="1085" y1="400.5" x2="1089" y2="400.5" stroke="#000" stroke-width="1"/>
<line x1="1085" y1="386.5" x2="1089" y2="386.5" stroke="#000" stroke-width="1"/>
<line x1="1085" y1="375.5" x2="1089" y2="375.5" stroke="#000" stroke-width="1"/>
<line x1="1085" y1="365.5" x2="1089" y2="365.5" stroke="#000" stroke-width="1"/>
<line x1="1082" y1="356.5" x2="1089" y2="356.5" stroke="#000" stroke-width="1"/>
<line x1="1085" y1="296.5" x2="1089" y2="296.5" stroke="#000" stroke-width="1"/>
<line x1="1085" y1="262.5" x2="1089" y2="262.5" stroke="#000" stroke-width="1"/>
<line x1="1085" y1="237.5" x2="1089" y2="237.5" stroke="#000" stroke-width="1"/>
<line x1="1085" y1="218.5" x2="1089" y2="218.5" stroke="#000" stroke-width="1"/>
<line x1="1085" y1="202.5" x2="1089" y2="202.5" stroke="#000" stroke-width="1"/>
<line x1="1085" y1="189.5" x2="1089" y2="189.5" stroke="#000" stroke-width="1"/>
<line x1="1085" y1="178.5" x2="1089" y2="178.5" stroke="#000" stroke-width="1"/>
<line x1="1085" y1="168.5" x2="1089" y2="168.5" stroke="#000" stroke-width="1"/>
<line x1="1082" y1="159.5" x2="1089" y2="159.5" stroke="#000" stroke-width="1"/>
<rect x="304.5" y="167.5" width="152" height="76" fill="none" stroke="#ababab" stroke-width="1"/>
<path d="M312,184 L328,178 V186 H312 Z" fill="#d2dbe6"/><path d="M312,184 L328,178" stroke="#4a5a9c" stroke-width="1"/><rect x="312" y="186" width="16" height="2" fill="#8e9cbf"/>
<path d="M312,197.5 H328" stroke="#0000ff" stroke-width="1" stroke-dasharray="3,2"/>
<path d="M312,212.5 H328" stroke="#000" stroke-width="1"/>
<circle cx="320" cy="227.5" r="3.5" fill="#000"/>
<rect x="1097.5" y="167.5" width="152" height="106" fill="none" stroke="#ababab" stroke-width="1"/>
<path d="M1105,184 L1121,178 V186 H1105 Z" fill="#d2dbe6"/><path d="M1105,184 L1121,178" stroke="#4a5a9c" stroke-width="1"/><rect x="1105" y="186" width="16" height="2" fill="#8e9cbf"/>
<path d="M1105,197.5 H1121" stroke="#0000ff" stroke-width="1" stroke-dasharray="3,2"/>
<path d="M1105,212.5 H1121" stroke="#000" stroke-width="1"/>
<circle cx="1113" cy="227.5" r="3.5" fill="#000"/>
<circle cx="1113" cy="242.6" r="3.2" fill="#00ffff" stroke="#000" stroke-width="1"/>
<rect x="1109.5" y="254" width="7" height="7" fill="#008000" stroke="#000" stroke-width="1"/>
<path d="M1335.5,402.4 V431.5 M1331.7,402.4 H1339.3 M1331.7,431.5 H1339.3" stroke="#000" stroke-width="1.3"/>
<rect x="1332.25" y="412.05" width="6.5" height="6.5" fill="#008000" stroke="#000" stroke-width="1.2"/>
<path d="M1437.65,340.4 V356.4 M1433.8500000000001,340.4 H1441.45 M1433.8500000000001,356.4 H1441.45" stroke="#000" stroke-width="1.3"/>
<rect x="1434.4" y="345.15" width="6.5" height="6.5" fill="#008000" stroke="#000" stroke-width="1.2"/>
<path d="M1473.45,311.5 V326.5 M1469.65,311.5 H1477.25 M1469.65,326.5 H1477.25" stroke="#000" stroke-width="1.3"/>
<rect x="1470.2" y="315.25" width="6.5" height="6.5" fill="#008000" stroke="#000" stroke-width="1.2"/>
<path d="M1392.6,369.4 V391.4 M1388.8,369.4 H1396.3999999999999 M1388.8,391.4 H1396.3999999999999" stroke="#000" stroke-width="1.3"/>
<circle cx="1392.6" cy="379.9" r="3.3" fill="#00ffff" stroke="#000" stroke-width="1"/>
<path d="M1449.3,344.4 V352.6 M1445.5,344.4 H1453.1 M1445.5,352.6 H1453.1" stroke="#000" stroke-width="1.3"/>
<circle cx="1449.3" cy="348.1" r="3.3" fill="#00ffff" stroke="#000" stroke-width="1"/>
<defs><linearGradient id="pk" x1="0" y1="0" x2="1" y2="0"><stop offset="0" stop-color="#3a2cff"/><stop offset="0.45" stop-color="#9a1a9a"/><stop offset="1" stop-color="#e8324e"/></linearGradient></defs>
<path d="M6,23.8 L6.4,18.5 Q8.2,12.2 10.5,17.3 Q12.2,8 13.7,8 Q15.3,8 16.6,14.8 Q17.8,20.6 20.6,23.8 Z" fill="url(#pk)"/>
<g transform="translate(34,89)"><path d="M0.7,0 V15.4 H16.5" fill="none" stroke="#000" stroke-width="1.3"/><path d="M1.4,14.7 L2,10 Q3.5,5 5.6,9.2 Q7.4,1 9,1 Q10.6,1 11.8,8 Q13,12.8 15.6,14.7 Z" fill="url(#pk)"/></g>
<g transform="translate(827,89)"><path d="M0.7,0 V15.4 H16.5" fill="none" stroke="#000" stroke-width="1.3"/><path d="M1.4,14.7 L2,10 Q3.5,5 5.6,9.2 Q7.4,1 9,1 Q10.6,1 11.8,8 Q13,12.8 15.6,14.7 Z" fill="url(#pk)"/></g>
<rect x="1548" y="19.5" width="11" height="2.6" fill="#000"/>
<rect x="1580.5" y="12.5" width="11" height="10" fill="none" stroke="#000" stroke-width="1"/><rect x="1580" y="12" width="12" height="2" fill="#000"/>
<path d="M1614,13 L1625,23.5 M1625,13 L1614,23.5" stroke="#000" stroke-width="1.2"/>
<path d="M14,66 h6 l1.5,1.5 h4.5 v6.5 h-12 z" fill="#dcb679"/>
<path d="M12,63.9 h5.8 M14.9,61 v5.8" stroke="#1d7a1d" stroke-width="2"/>
<path d="M36.5,66.5 h12.5 v8.5 h-12.5 z" fill="#dcb679"/><path d="M37.5,70 h12.5 l-1.5,5 h-11.5z" fill="#e7c58e"/>
<path d="M37.8,68.5 Q36,64 41.5,63.8 H43.5" fill="none" stroke="#0a56a8" stroke-width="1.8"/><path d="M42,60.8 L45.5,63.8 L42,66.8 Z" fill="#0a56a8"/>
<path d="M60,61 H73.8 V75.1 H62 L60,73 Z" fill="#0a4fa0"/><rect x="62" y="63" width="9.6" height="4" fill="#d6dbe9"/><rect x="63" y="70" width="8.5" height="5.1" fill="#d6dbe9"/><rect x="65" y="72" width="2.4" height="3.1" fill="#0a4fa0"/>
<rect x="806" y="93" width="8" height="2" fill="#e8ebf3"/><path d="M806,97 h8 l-4,4 z" fill="#e8ebf3"/>
<rect x="1599" y="93" width="8" height="2" fill="#e8ebf3"/><path d="M1599,97 h8 l-4,4 z" fill="#e8ebf3"/>
<path d="M991,92.5 L999.5,100.5 M999.5,92.5 L991,100.5" stroke="#222" stroke-width="1.2"/>
<rect x="780" y="151" width="20" height="20" fill="#a3c3ec"/>
<path d="M786,153 L795.2,161.7 L791.3,162 L793.8,167.3 L792,168.3 L789.5,163.2 L786,166.5 Z" fill="#000"/>
<g transform="translate(0,0)"><path d="M787.3,196.2 L787,193 L782.2,187.6 Q780.8,185.6 782.6,185 Q783.8,184.8 785.6,186.8 L786.3,187.4 L784.2,181.2 Q783.8,178.6 785.6,178.6 Q786.6,178.6 787.2,180.4 L788.6,184.4 L788.4,179 Q788.5,177 790,177 Q791.4,177 791.5,179 L791.8,184.2 L792.6,179.8 Q793,178 794.4,178.3 Q795.7,178.7 795.5,180.5 L795,185 L796,182 Q796.6,180.6 797.7,181 Q798.9,181.5 798.6,183.2 L797.6,189.5 L795.7,196.2" fill="#fff" stroke="#000" stroke-width="1.4" stroke-linejoin="round"/></g>
<circle cx="787.8" cy="209.1" r="5.8" fill="none" stroke="#000" stroke-width="1.6"/><path d="M784.6,209.1 h6.4 M787.8,205.9 v6.4" stroke="#000" stroke-width="1.5"/><path d="M792.2,213.5 L799,220.3" stroke="#000" stroke-width="2.6"/>
<g transform="translate(0,0)"><path d="M781.5,231.7 V227.5 H785.7 M794.3,227.5 H798.5 V231.7 M781.5,240.3 V244.5 H785.7 M794.3,244.5 H798.5 V240.3" fill="none" stroke="#000" stroke-width="2.6"/><path d="M790,229.8 V234.4 M790,237.6 V242.2 M783.8,236 H788.4 M791.6,236 H796.2" stroke="#333" stroke-width="1.3"/><path d="M790,226.8 L792,229.8 H788 Z M790,245.2 L792,242.2 H788 Z M780.8,236 L783.8,234 V238 Z M799.2,236 L796.2,234 V238 Z" fill="#000" stroke="#000" stroke-width="1.3" stroke-linejoin="round"/></g>
<rect x="788.3" y="253.3" width="3.5" height="15.4" fill="#000"/><rect x="782.3" y="258.8" width="15.4" height="4" fill="#000"/>
<path d="M784.5,280.8 L785.5,278.2 H794.5 L795.5,280.8 H798 Q800,280.8 800,282.8 V292.5 Q800,294.5 798,294.5 H782 Q780.2,294.5 780.2,292.5 V282.8 Q780.2,280.8 782,280.8 Z" fill="#000"/>
<circle cx="790" cy="287.4" r="5.1" fill="none" stroke="#fff" stroke-width="1.4"/><circle cx="783" cy="283" r="0.9" fill="#fff"/>
<path d="M787,304.5 H782 Q781.3,304.5 781.3,305.5 V318.6 Q781.3,319.5 782.3,319.5 H795.6 Q796.6,319.5 796.6,318.6 V312.5" fill="none" stroke="#000" stroke-width="2.5"/>
<path d="M784.3,314.8 Q785.3,304.6 794.5,304.2 V301.4 L800.4,307.3 L794.5,313.1 V310 Q788.5,309.6 784.3,314.8 Z" fill="#000"/>
<g fill="#000"><rect x="-1.9" y="-10" width="3.8" height="5" transform="translate(790,335.8) rotate(0)"/><rect x="-1.9" y="-10" width="3.8" height="5" transform="translate(790,335.8) rotate(45)"/><rect x="-1.9" y="-10" width="3.8" height="5" transform="translate(790,335.8) rotate(90)"/><rect x="-1.9" y="-10" width="3.8" height="5" transform="translate(790,335.8) rotate(135)"/><rect x="-1.9" y="-10" width="3.8" height="5" transform="translate(790,335.8) rotate(180)"/><rect x="-1.9" y="-10" width="3.8" height="5" transform="translate(790,335.8) rotate(225)"/><rect x="-1.9" y="-10" width="3.8" height="5" transform="translate(790,335.8) rotate(270)"/><rect x="-1.9" y="-10" width="3.8" height="5" transform="translate(790,335.8) rotate(315)"/><circle cx="790" cy="335.8" r="7.3"/></g><circle cx="790" cy="335.8" r="3.6" fill="#d6dbe9"/>
<rect x="1573" y="151" width="20" height="20" fill="#a3c3ec"/>
<path d="M1579,153 L1588.2,161.7 L1584.3,162 L1586.8,167.3 L1585,168.3 L1582.5,163.2 L1579,166.5 Z" fill="#000"/>
<g transform="translate(793,0)"><path d="M787.3,196.2 L787,193 L782.2,187.6 Q780.8,185.6 782.6,185 Q783.8,184.8 785.6,186.8 L786.3,187.4 L784.2,181.2 Q783.8,178.6 785.6,178.6 Q786.6,178.6 787.2,180.4 L788.6,184.4 L788.4,179 Q788.5,177 790,177 Q791.4,177 791.5,179 L791.8,184.2 L792.6,179.8 Q793,178 794.4,178.3 Q795.7,178.7 795.5,180.5 L795,185 L796,182 Q796.6,180.6 797.7,181 Q798.9,181.5 798.6,183.2 L797.6,189.5 L795.7,196.2" fill="#fff" stroke="#000" stroke-width="1.4" stroke-linejoin="round"/></g>
<circle cx="1580.8" cy="209.1" r="5.8" fill="none" stroke="#000" stroke-width="1.6"/><path d="M1577.6,209.1 h6.4 M1580.8,205.9 v6.4" stroke="#000" stroke-width="1.5"/><path d="M1585.2,213.5 L1592,220.3" stroke="#000" stroke-width="2.6"/>
<g transform="translate(793,0)"><path d="M781.5,231.7 V227.5 H785.7 M794.3,227.5 H798.5 V231.7 M781.5,240.3 V244.5 H785.7 M794.3,244.5 H798.5 V240.3" fill="none" stroke="#000" stroke-width="2.6"/><path d="M790,229.8 V234.4 M790,237.6 V242.2 M783.8,236 H788.4 M791.6,236 H796.2" stroke="#333" stroke-width="1.3"/><path d="M790,226.8 L792,229.8 H788 Z M790,245.2 L792,242.2 H788 Z M780.8,236 L783.8,234 V238 Z M799.2,236 L796.2,234 V238 Z" fill="#000" stroke="#000" stroke-width="1.3" stroke-linejoin="round"/></g>
<rect x="1581.3" y="253.3" width="3.5" height="15.4" fill="#000"/><rect x="1575.3" y="258.8" width="15.4" height="4" fill="#000"/>
<path d="M1577.5,280.8 L1578.5,278.2 H1587.5 L1588.5,280.8 H1591 Q1593,280.8 1593,282.8 V292.5 Q1593,294.5 1591,294.5 H1575 Q1573.2,294.5 1573.2,292.5 V282.8 Q1573.2,280.8 1575,280.8 Z" fill="#000"/>
<circle cx="1583" cy="287.4" r="5.1" fill="none" stroke="#fff" stroke-width="1.4"/><circle cx="1576" cy="283" r="0.9" fill="#fff"/>
<path d="M1580,304.5 H1575 Q1574.3,304.5 1574.3,305.5 V318.6 Q1574.3,319.5 1575.3,319.5 H1588.6 Q1589.6,319.5 1589.6,318.6 V312.5" fill="none" stroke="#000" stroke-width="2.5"/>
<path d="M1577.3,314.8 Q1578.3,304.6 1587.5,304.2 V301.4 L1593.4,307.3 L1587.5,313.1 V310 Q1581.5,309.6 1577.3,314.8 Z" fill="#000"/>
<g fill="#000"><rect x="-1.9" y="-10" width="3.8" height="5" transform="translate(1583,335.8) rotate(0)"/><rect x="-1.9" y="-10" width="3.8" height="5" transform="translate(1583,335.8) rotate(45)"/><rect x="-1.9" y="-10" width="3.8" height="5" transform="translate(1583,335.8) rotate(90)"/><rect x="-1.9" y="-10" width="3.8" height="5" transform="translate(1583,335.8) rotate(135)"/><rect x="-1.9" y="-10" width="3.8" height="5" transform="translate(1583,335.8) rotate(180)"/><rect x="-1.9" y="-10" width="3.8" height="5" transform="translate(1583,335.8) rotate(225)"/><rect x="-1.9" y="-10" width="3.8" height="5" transform="translate(1583,335.8) rotate(270)"/><rect x="-1.9" y="-10" width="3.8" height="5" transform="translate(1583,335.8) rotate(315)"/><circle cx="1583" cy="335.8" r="7.3"/></g><circle cx="1583" cy="335.8" r="3.6" fill="#d6dbe9"/>
<rect x="33.5" y="858.5" width="65" height="23" fill="none" stroke="#1e9bff" stroke-width="1"/>
<rect x="104.5" y="858.5" width="85" height="23" fill="none" stroke="#1e9bff" stroke-width="1"/>
<rect x="405.5" y="858.5" width="23" height="23" fill="none" stroke="#1e9bff" stroke-width="1"/>
<rect x="101" y="859.5" width="1" height="21" fill="#b9bdc9"/>
<rect x="192" y="859.5" width="1" height="21" fill="#b9bdc9"/>
<rect x="307" y="859.5" width="1" height="21" fill="#b9bdc9"/>
<rect x="402" y="859.5" width="1" height="21" fill="#b9bdc9"/>
<rect x="431" y="859.5" width="1" height="21" fill="#b9bdc9"/>
<circle cx="43.1" cy="870" r="7" fill="#e1201a"/><path d="M40,866.9 L46.2,873.1 M46.2,866.9 L40,873.1" stroke="#fff" stroke-width="1.9"/>
<path d="M114,862.8 L121.4,876.8 H106.6 Z" fill="#ffcc00" stroke="#ffcc00" stroke-width="0.8" stroke-linejoin="round"/><rect x="113.2" y="866.5" width="1.8" height="5.6" fill="#000"/><rect x="113.2" y="873.2" width="1.8" height="1.8" fill="#000"/>
<circle cx="204.8" cy="870" r="7.1" fill="#1b9de2"/><rect x="203.9" y="867.6" width="1.9" height="6.6" fill="#fff"/><circle cx="204.85" cy="865.3" r="1.1" fill="#fff"/>
<path d="M321.5,863.5 L316,871 H319.5 L316.5,877 L323.5,868.8 H320 L323.5,863.5 Z" fill="#333"/>
<path d="M410.4,863.3 L415.7,868.5 M415.7,863.3 L410.4,868.5" stroke="#b8200a" stroke-width="1.8"/><path d="M416,868 H424 L420.5,872.5 V877 H417.7 V872.5 Z" fill="#404040"/>
<path d="M442,867 V875.5 H450.5 V867.5 L447,864 H446" fill="#eeeeee" stroke="#333" stroke-width="1"/><path d="M447,864 V867 H450.5" fill="none" stroke="#333" stroke-width="0.8"/>
<path d="M441.2,869.8 Q438.5,866.5 443,866 H444.5" fill="none" stroke="#0a5cb0" stroke-width="1.5"/><path d="M444,863.3 L447,866 L444,868.7 Z" fill="#0a5cb0"/>
<rect x="31" y="907" width="1579" height="1" fill="#c9cdd8"/>
<rect x="50" y="884" width="1" height="23" fill="#d3d7e1"/>
<rect x="110" y="884" width="1" height="23" fill="#d3d7e1"/>
<rect x="1465" y="884" width="1" height="23" fill="#d3d7e1"/>
<rect x="1508" y="884" width="1" height="23" fill="#d3d7e1"/>
<rect x="1547" y="884" width="1" height="23" fill="#d3d7e1"/>
<path d="M1566,843 h8 l-4,4.5 z" fill="#e8ebf3"/>
<path d="M1582,841.5 h6 M1583,841.5 v6 M1587,841.5 v6 M1581,847.5 h8 M1585,847.5 v4" fill="none" stroke="#e8ebf3" stroke-width="1"/>
<path d="M1595.5,841 L1603.5,849.5 M1603.5,841 L1595.5,849.5" stroke="#e8ebf3" stroke-width="1.2"/>
</svg>
<div class="t" style="left:26.34px;top:12.90px;font-size:12.2px;line-height:12.2px;color:#000;transform:scaleX(0.9548);">RMC-BestFit 1.0  -  C:\0RMC_Work\RMC_General\0_HHT\BestFit\Example Project\Example BestFit Project.bestfit</div>
<div class="t" style="left:8.53px;top:37.75px;font-size:12.5px;line-height:12.5px;color:#1e1e1e;transform:scaleX(0.9428);">File</div>
<div class="t" style="left:40.94px;top:37.75px;font-size:12.5px;line-height:12.5px;color:#1e1e1e;transform:scaleX(0.9313);">View</div>
<div class="t" style="left:79.00px;top:37.75px;font-size:12.5px;line-height:12.5px;color:#1e1e1e;transform:scaleX(0.9714);">Project</div>
<div class="t" style="left:130.83px;top:37.75px;font-size:12.5px;line-height:12.5px;color:#1e1e1e;transform:scaleX(0.9730);">Tools</div>
<div class="t" style="left:172.84px;top:37.75px;font-size:12.5px;line-height:12.5px;color:#1e1e1e;transform:scaleX(0.9924);">Window</div>
<div class="t" style="left:229.95px;top:37.75px;font-size:12.5px;line-height:12.5px;color:#1e1e1e;transform:scaleX(1.0184);">Help</div>
<div class="t" style="left:25.80px;top:87.54px;font-size:12.8px;line-height:12.8px;color:#fff;transform:rotate(90deg) scaleX(0.9077);">Project Explorer</div>
<div class="t" style="left:1626.70px;top:87.42px;font-size:12.8px;line-height:12.8px;color:#fff;transform:rotate(90deg) scaleX(0.9255);">Properties</div>
<div class="t" style="left:53.76px;top:90.85px;font-size:12.3px;line-height:12.3px;color:#fff;transform:scaleX(0.9711);">Systematic - MCMC</div>
<div class="t" style="left:846.04px;top:90.85px;font-size:12.3px;line-height:12.3px;color:#000;transform:scaleX(0.9418);">Example Bayesian MCMC</div>
<div class="t" style="left:48.45px;top:125.90px;font-size:12.2px;line-height:12.2px;color:#000;transform:scaleX(0.9443);">Frequency Results</div>
<div class="t" style="left:48.44px;top:155.90px;font-size:12.2px;line-height:12.2px;color:#000;transform:scaleX(0.9503);">Kernel Density</div>
<div class="t" style="left:48.37px;top:185.90px;font-size:12.2px;line-height:12.2px;color:#000;transform:scaleX(1.0204);">Histogram</div>
<div class="t" style="left:48.43px;top:215.90px;font-size:12.2px;line-height:12.2px;color:#000;transform:scaleX(0.9666);">Bivariate</div>
<div class="t" style="left:48.39px;top:245.90px;font-size:12.2px;line-height:12.2px;color:#000;">Mean Likelihood</div>
<div class="t" style="left:49.37px;top:275.90px;font-size:12.2px;line-height:12.2px;color:#000;transform:scaleX(1.0092);">Autocorrelation</div>
<div class="t" style="left:48.43px;top:305.90px;font-size:12.2px;line-height:12.2px;color:#000;transform:scaleX(0.9611);">Markov Chain Traces</div>
<div class="t" style="left:198.93px;top:124.90px;font-size:12.2px;line-height:12.2px;color:#000;transform:scaleX(0.9407);">Graphical Results</div>
<div class="t" style="left:312.14px;top:124.90px;font-size:12.2px;line-height:12.2px;color:#000;transform:scaleX(0.9414);">Tabular Results</div>
<div class="t" style="left:412.47px;top:124.90px;font-size:12.2px;line-height:12.2px;color:#000;transform:scaleX(0.9253);">Parameter Sets</div>
<div class="t" style="left:841.45px;top:125.90px;font-size:12.2px;line-height:12.2px;color:#000;transform:scaleX(0.9443);">Frequency Results</div>
<div class="t" style="left:841.44px;top:155.90px;font-size:12.2px;line-height:12.2px;color:#000;transform:scaleX(0.9503);">Kernel Density</div>
<div class="t" style="left:841.37px;top:185.90px;font-size:12.2px;line-height:12.2px;color:#000;transform:scaleX(1.0204);">Histogram</div>
<div class="t" style="left:841.43px;top:215.90px;font-size:12.2px;line-height:12.2px;color:#000;transform:scaleX(0.9666);">Bivariate</div>
<div class="t" style="left:841.39px;top:245.90px;font-size:12.2px;line-height:12.2px;color:#000;">Mean Likelihood</div>
<div class="t" style="left:842.37px;top:275.90px;font-size:12.2px;line-height:12.2px;color:#000;transform:scaleX(1.0092);">Autocorrelation</div>
<div class="t" style="left:841.43px;top:305.90px;font-size:12.2px;line-height:12.2px;color:#000;transform:scaleX(0.9611);">Markov Chain Traces</div>
<div class="t" style="left:991.93px;top:124.90px;font-size:12.2px;line-height:12.2px;color:#000;transform:scaleX(0.9407);">Graphical Results</div>
<div class="t" style="left:1105.14px;top:124.90px;font-size:12.2px;line-height:12.2px;color:#000;transform:scaleX(0.9414);">Tabular Results</div>
<div class="t" style="left:1205.47px;top:124.90px;font-size:12.2px;line-height:12.2px;color:#000;transform:scaleX(0.9253);">Parameter Sets</div>
<div class="t" style="left:40.42px;top:839.90px;font-size:12.2px;line-height:12.2px;color:#fff;transform:scaleX(0.9768);">Message Window</div>
<div class="t" style="left:237.50px;top:154.00px;font-size:12px;line-height:12px;color:#1a1a1a;transform:scaleX(0.8939);">1,000,000</div>
<div class="t" style="left:245.99px;top:351.00px;font-size:12px;line-height:12px;color:#1a1a1a;transform:scaleX(0.9048);">100,000</div>
<div class="t" style="left:252.09px;top:548.00px;font-size:12px;line-height:12px;color:#1a1a1a;transform:scaleX(0.9027);">10,000</div>
<div class="t" style="left:258.19px;top:746.00px;font-size:12px;line-height:12px;color:#1a1a1a;transform:scaleX(0.8996);">1,000</div>
<div class="t" style="left:282.58px;top:757.00px;font-size:12px;line-height:12px;color:#1a1a1a;transform:scaleX(0.9366);">0.999</div>
<div class="t" style="left:328.88px;top:757.00px;font-size:12px;line-height:12px;color:#1a1a1a;transform:scaleX(0.9262);">0.99</div>
<div class="t" style="left:390.46px;top:757.00px;font-size:12px;line-height:12px;color:#1a1a1a;transform:scaleX(0.9688);">0.9</div>
<div class="t" style="left:462.47px;top:757.00px;font-size:12px;line-height:12px;color:#1a1a1a;transform:scaleX(0.9460);">0.5</div>
<div class="t" style="left:534.70px;top:757.00px;font-size:12px;line-height:12px;color:#1a1a1a;transform:scaleX(0.8812);">0.1</div>
<div class="t" style="left:590.60px;top:757.00px;font-size:12px;line-height:12px;color:#1a1a1a;transform:scaleX(0.8826);">0.01</div>
<div class="t" style="left:630.50px;top:757.00px;font-size:12px;line-height:12px;color:#1a1a1a;transform:scaleX(0.8962);">0.001</div>
<div class="t" style="left:669.17px;top:757.00px;font-size:12px;line-height:12px;color:#1a1a1a;transform:scaleX(0.9215);">1E-4</div>
<div class="t" style="left:700.18px;top:757.00px;font-size:12px;line-height:12px;color:#1a1a1a;transform:scaleX(0.9148);">1E-5</div>
<div class="t" style="left:726.96px;top:757.00px;font-size:12px;line-height:12px;color:#1a1a1a;transform:scaleX(0.9368);">1E-6</div>
<div class="t" style="left:752.87px;top:757.00px;font-size:12px;line-height:12px;color:#1a1a1a;transform:scaleX(0.9182);">1E-7</div>
<div class="t" style="left:425.16px;top:783.60px;font-size:15.8px;line-height:15.8px;color:#1a1a1a;transform:scaleX(0.9601);">Annual Exceedance Probability</div>
<div class="t" style="left:210.20px;top:515.07px;font-size:15.8px;line-height:15.8px;color:#1a1a1a;transform:rotate(-90deg) scaleX(0.9571);">3-Day Flow (CFS)</div>
<div class="t" style="left:1030.50px;top:154.00px;font-size:12px;line-height:12px;color:#1a1a1a;transform:scaleX(0.8939);">1,000,000</div>
<div class="t" style="left:1038.99px;top:351.00px;font-size:12px;line-height:12px;color:#1a1a1a;transform:scaleX(0.9048);">100,000</div>
<div class="t" style="left:1045.09px;top:548.00px;font-size:12px;line-height:12px;color:#1a1a1a;transform:scaleX(0.9027);">10,000</div>
<div class="t" style="left:1051.19px;top:746.00px;font-size:12px;line-height:12px;color:#1a1a1a;transform:scaleX(0.8996);">1,000</div>
<div class="t" style="left:1075.58px;top:757.00px;font-size:12px;line-height:12px;color:#1a1a1a;transform:scaleX(0.9366);">0.999</div>
<div class="t" style="left:1121.88px;top:757.00px;font-size:12px;line-height:12px;color:#1a1a1a;transform:scaleX(0.9262);">0.99</div>
<div class="t" style="left:1183.46px;top:757.00px;font-size:12px;line-height:12px;color:#1a1a1a;transform:scaleX(0.9688);">0.9</div>
<div class="t" style="left:1255.47px;top:757.00px;font-size:12px;line-height:12px;color:#1a1a1a;transform:scaleX(0.9460);">0.5</div>
<div class="t" style="left:1327.70px;top:757.00px;font-size:12px;line-height:12px;color:#1a1a1a;transform:scaleX(0.8812);">0.1</div>
<div class="t" style="left:1383.60px;top:757.00px;font-size:12px;line-height:12px;color:#1a1a1a;transform:scaleX(0.8826);">0.01</div>
<div class="t" style="left:1423.50px;top:757.00px;font-size:12px;line-height:12px;color:#1a1a1a;transform:scaleX(0.8962);">0.001</div>
<div class="t" style="left:1462.17px;top:757.00px;font-size:12px;line-height:12px;color:#1a1a1a;transform:scaleX(0.9215);">1E-4</div>
<div class="t" style="left:1493.18px;top:757.00px;font-size:12px;line-height:12px;color:#1a1a1a;transform:scaleX(0.9148);">1E-5</div>
<div class="t" style="left:1519.96px;top:757.00px;font-size:12px;line-height:12px;color:#1a1a1a;transform:scaleX(0.9368);">1E-6</div>
<div class="t" style="left:1545.87px;top:757.00px;font-size:12px;line-height:12px;color:#1a1a1a;transform:scaleX(0.9182);">1E-7</div>
<div class="t" style="left:1218.16px;top:783.60px;font-size:15.8px;line-height:15.8px;color:#1a1a1a;transform:scaleX(0.9601);">Annual Exceedance Probability</div>
<div class="t" style="left:1003.20px;top:515.07px;font-size:15.8px;line-height:15.8px;color:#1a1a1a;transform:rotate(-90deg) scaleX(0.9571);">3-Day Flow (CFS)</div>
<div class="t" style="left:331.88px;top:176.90px;font-size:12.2px;line-height:12.2px;color:#000;transform:scaleX(0.9494);">90% Credible Intervals</div>
<div class="t" style="left:331.42px;top:191.90px;font-size:12.2px;line-height:12.2px;color:#000;transform:scaleX(0.9736);">Posterior Predictive</div>
<div class="t" style="left:331.40px;top:206.90px;font-size:12.2px;line-height:12.2px;color:#000;transform:scaleX(0.9927);">Posterior Mode</div>
<div class="t" style="left:331.89px;top:221.90px;font-size:12.2px;line-height:12.2px;color:#000;transform:scaleX(0.9377);">Systematic Data</div>
<div class="t" style="left:1124.88px;top:176.90px;font-size:12.2px;line-height:12.2px;color:#000;transform:scaleX(0.9494);">90% Credible Intervals</div>
<div class="t" style="left:1124.42px;top:191.90px;font-size:12.2px;line-height:12.2px;color:#000;transform:scaleX(0.9736);">Posterior Predictive</div>
<div class="t" style="left:1124.40px;top:206.90px;font-size:12.2px;line-height:12.2px;color:#000;transform:scaleX(0.9927);">Posterior Mode</div>
<div class="t" style="left:1124.89px;top:221.90px;font-size:12.2px;line-height:12.2px;color:#000;transform:scaleX(0.9377);">Systematic Data</div>
<div class="t" style="left:1124.33px;top:236.90px;font-size:12.2px;line-height:12.2px;color:#000;transform:scaleX(0.9523);">Interval Data</div>
<div class="t" style="left:1124.83px;top:251.90px;font-size:12.2px;line-height:12.2px;color:#000;transform:scaleX(0.9795);">Quantile Prior</div>
<div class="t" style="left:54.58px;top:864.90px;font-size:12.2px;line-height:12.2px;color:#000;transform:scaleX(0.9179);">0 Errors</div>
<div class="t" style="left:125.65px;top:864.90px;font-size:12.2px;line-height:12.2px;color:#000;transform:scaleX(0.9791);">0 Warnings</div>
<div class="t" style="left:216.57px;top:864.90px;font-size:12.2px;line-height:12.2px;color:#000;transform:scaleX(0.9331);">0 of 5 Messages</div>
<div class="t" style="left:328.47px;top:864.90px;font-size:12.2px;line-height:12.2px;color:#000;transform:scaleX(0.9327);">0 of 4 Events</div>
<div class="t" style="left:67.02px;top:889.90px;font-size:12.2px;line-height:12.2px;color:#000;transform:scaleX(1.0285);">Time</div>
<div class="t" style="left:113.40px;top:889.90px;font-size:12.2px;line-height:12.2px;color:#000;transform:scaleX(0.9961);">Description</div>
<div class="t" style="left:1468.58px;top:889.90px;font-size:12.2px;line-height:12.2px;color:#000;transform:scaleX(0.9554);">Source</div>
<div class="t" style="left:1511.38px;top:889.90px;font-size:12.2px;line-height:12.2px;color:#000;transform:scaleX(1.0091);">Name</div>
<div class="t" style="left:1550.44px;top:889.90px;font-size:12.2px;line-height:12.2px;color:#000;transform:scaleX(0.9560);">Parameter</div>
<div class="r" style="left:0;top:0;width:1638px;height:1002px;border:1px solid #0b79d5;"></div>
</body></html>
